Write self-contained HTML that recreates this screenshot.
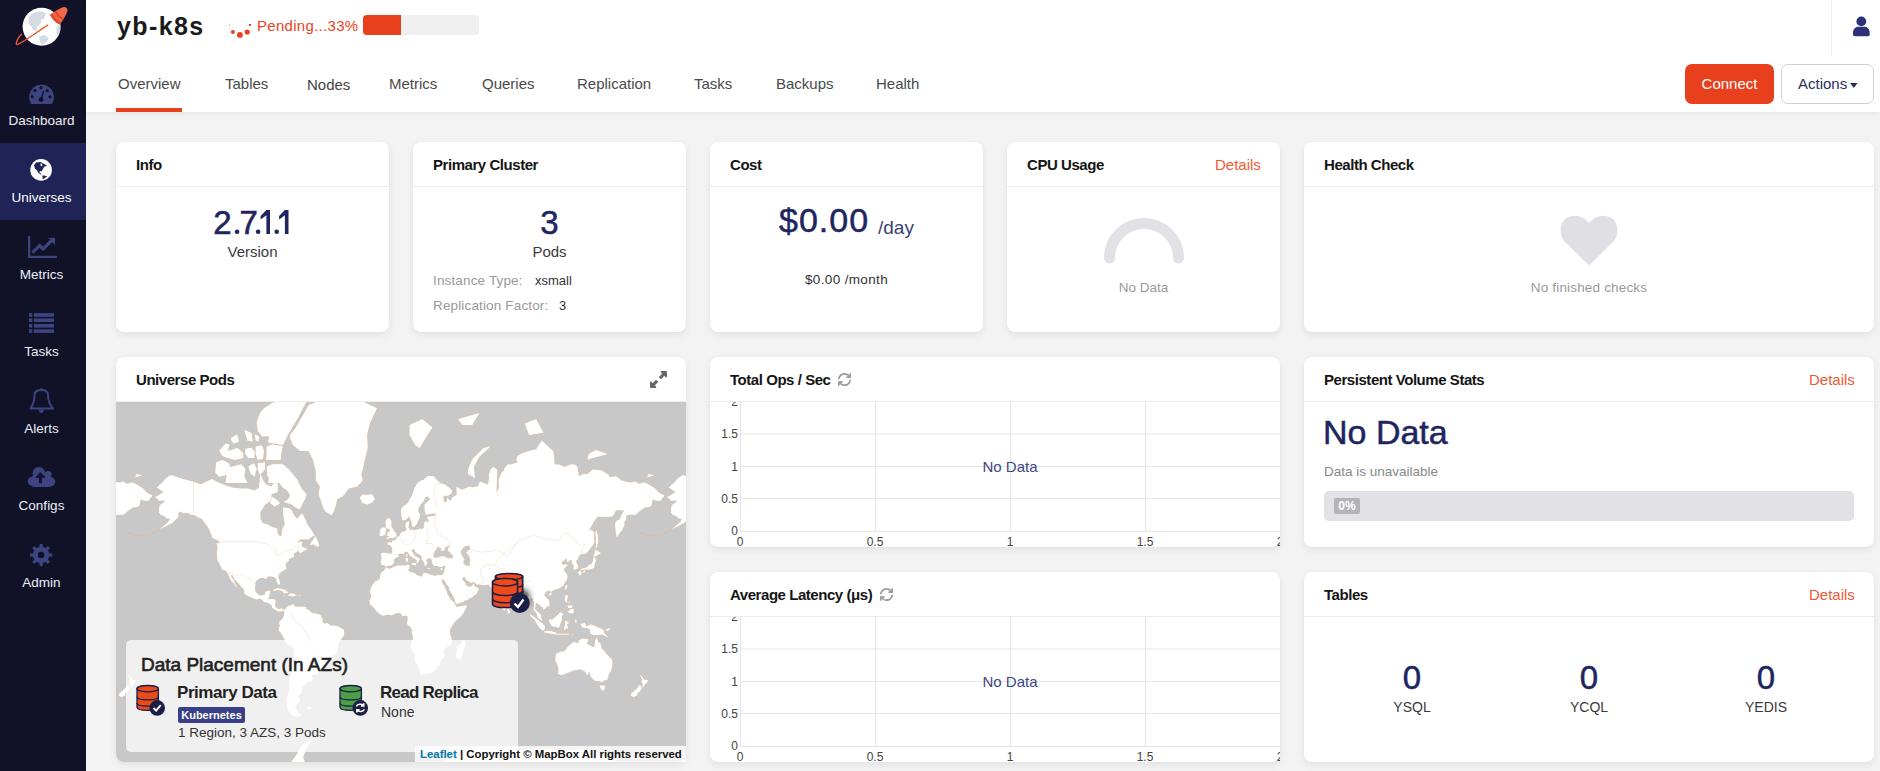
<!DOCTYPE html>
<html><head><meta charset="utf-8">
<style>
*{box-sizing:border-box;margin:0;padding:0}
html,body{width:1880px;height:771px;overflow:hidden;background:#f3f3f3;font-family:"Liberation Sans",sans-serif;color:#333}
.a{position:absolute;white-space:nowrap}
#side{position:absolute;left:0;top:0;width:86px;height:771px;background:#111228}
#side .act{position:absolute;left:0;top:143px;width:86px;height:77px;background:#1f2356}
#side .lbl{position:absolute;width:83px;text-align:center;font-size:13.5px;line-height:14px;color:#eceef5}
#hdr{position:absolute;left:86px;top:0;width:1794px;height:112px;background:#fff;box-shadow:0 2px 6px rgba(0,0,0,0.06)}
.tab{position:absolute;top:76px;font-size:15px;line-height:15px;color:#4a4a4a}
.card{position:absolute;background:#fff;border-radius:8px;box-shadow:0 3px 8px rgba(0,0,0,0.07),0 0 2px rgba(0,0,0,0.04);overflow:hidden}
.card .hd{position:absolute;left:0;top:0;right:0;height:45px;border-bottom:1px solid #ececec}
.ttl{position:absolute;font-size:15px;line-height:15px;font-weight:bold;color:#151515;letter-spacing:-0.45px}
.det{position:absolute;font-size:15px;line-height:15px;color:#ef5a35}
.big{position:absolute;font-size:33px;line-height:33px;color:#202461;text-align:center;-webkit-text-stroke:0.5px #202461}
.sub{position:absolute;font-size:15px;line-height:15px;color:#3a3a3a;text-align:center}
.grey{position:absolute;font-size:13.5px;line-height:13px;color:#999;letter-spacing:0.15px}
</style></head><body>
<div id="side">
  <div class="act"></div>
<svg class="a" style="left:0;top:0" width="86" height="771" viewBox="0 0 86 771">
<!-- logo -->
<g>
<circle cx="41.6" cy="26.8" r="19" fill="#fff"/>
<path d="M28.5 17 C32 12.5 38 11 43 11.5 L46 14 L44 18.5 L41 20 L40.5 24 L37 26.5 L36 31 L33 30 L31 26 L28.5 24 Z" fill="#d5dbe2"/>
<path d="M38.5 36.5 L44 35 L49 38 L46.5 42 L44 44 L41.5 45 L40 41 Z" fill="#d5dbe2"/>
<path d="M56.5 27 L59.5 24.5 L60.3 30 L58.5 36 L56.5 33 Z" fill="#d5dbe2"/>
<path d="M48.2 24.9 C40 30 32 36 24.5 40.5 C19 43.8 16 46 16.3 43.5 C16.6 40.5 19 36.5 21.8 33.9" fill="none" stroke="#e8542e" stroke-width="1.4"/>
<g transform="translate(59.5 15) rotate(45)">
<path d="M-6.8 6.5 C-6 0 -4.5 -5 -3 -8 C-2.2 -9.4 -1.5 -9.8 0 -9.8 C1.5 -9.8 2.2 -9.4 3 -8 C4.5 -5 6 0 6.8 6.5 C2.5 8.3 -2.5 8.3 -6.8 6.5 Z" fill="#ef6a4c"/>
<path d="M-6.8 6.5 C-2.5 8.3 2.5 8.3 6.8 6.5 L6.3 3.8 C2.3 5.5 -2.3 5.5 -6.3 3.8 Z" fill="#e24a27"/>
<path d="M-5.8 1.2 C-2 2.8 2 2.8 5.8 1.2 L5.4 -0.9 C2 0.6 -2 0.6 -5.4 -0.9 Z" fill="#e24a27"/>
</g>
</g>
<!-- dashboard -->
<path d="M31.1 104 A12.5 12.5 0 1 1 51.9 104 Z" fill="#3d4580"/>
<g fill="#111228"><circle cx="32.2" cy="96.7" r="1.6"/><circle cx="34.9" cy="90.5" r="1.6"/><circle cx="41" cy="87.7" r="1.6"/><circle cx="47.3" cy="90.5" r="1.6"/><circle cx="50" cy="96.8" r="1.6"/><circle cx="41.1" cy="99.6" r="2.4"/></g>
<path d="M40.3 99.5 L43 91 L44.1 91.3 L42 99.8 Z" fill="#111228"/>
<!-- universes globe -->
<circle cx="41.1" cy="169.9" r="10.8" fill="#fff"/>
<polygon fill="#1f2356" points="34.0,165.3 36.1,162.4 40.4,162.0 42.3,163.1 47.0,165.5 44.3,166.8 42.7,169.2 41.6,171.5 40.4,171.1 39.2,171.9 40.0,172.7 41.6,174.2 40.8,174.6 38.5,173.1 36.9,170.3 35.1,168.8"/>
<polygon fill="#fff" points="40.2,163.5 42,163.8 42.5,165.5 41,166.2"/>
<polygon fill="#1f2356" points="42.7,175.3 47.3,176.2 43.5,179 42.3,178.6"/>
<!-- metrics -->
<g fill="#3d4580">
<rect x="28" y="236" width="2.2" height="22"/><rect x="28" y="255.8" width="29" height="2.2"/>
<path d="M31.5 251.6 L39.6 243.3 L43.1 246.8 L50.2 239.6 L47.9 237.9 L55.1 237.8 L54.9 244.9 L52.2 242.2 L43.1 251.2 L39.6 247.7 L33.5 253.8 Z"/>
</g>
<!-- tasks -->
<g fill="#3d4580">
<rect x="29" y="313.1" width="3.3" height="3.7"/><rect x="33.9" y="313.1" width="20.1" height="3.7"/>
<rect x="29" y="318.4" width="3.3" height="3.6"/><rect x="33.9" y="318.4" width="20.1" height="3.6"/>
<rect x="29" y="324" width="3.3" height="3.6"/><rect x="33.9" y="324" width="20.1" height="3.6"/>
<rect x="29" y="329.3" width="3.3" height="3.6"/><rect x="33.9" y="329.3" width="20.1" height="3.6"/>
</g>
<!-- alerts bell -->
<g fill="none" stroke="#3d4580" stroke-width="1.9" stroke-linejoin="round">
<path d="M30.5 408.5 L53 408.5 C49 404 48 400 48 395 C48 391 45.5 390 41.3 390 C37 390 34.5 391 34.5 395 C34.5 400 33.5 404 30.5 408.5 Z"/>
</g>
<circle cx="41.3" cy="389.2" r="1.1" fill="#3d4580"/>
<path d="M38.5 409.5 L44 409.5 C43.5 412 42.5 413 41.3 413 C40 413 39 412 38.5 409.5 Z" fill="#3d4580"/>
<!-- configs cloud -->
<g fill="#3d4580">
<circle cx="38.8" cy="473.2" r="6.2"/><circle cx="48.1" cy="474.4" r="3.4"/>
<circle cx="32.2" cy="481.3" r="4.5"/><circle cx="50.5" cy="481.8" r="4.7"/>
<rect x="32" y="476" width="18" height="10.5"/>
<rect x="32.2" y="480" width="18.5" height="7" rx="3"/>
</g>
<path fill="#111228" d="M35.1 477.8 L40.3 471.9 L45.8 477.8 L41.9 477.8 L41.9 483.2 L39 483.2 L39 477.8 Z"/>
<!-- admin gear -->
<g fill="#3d4580" transform="translate(41.1 555)">
<circle r="8.3"/>
<g id="teeth"><rect x="-1.6" y="-11.1" width="3.2" height="4"/><rect x="-1.6" y="7.1" width="3.2" height="4"/><rect x="-11.1" y="-1.6" width="4" height="3.2"/><rect x="7.1" y="-1.6" width="4" height="3.2"/></g>
<g transform="rotate(45)"><rect x="-1.6" y="-11.1" width="3.2" height="4"/><rect x="-1.6" y="7.1" width="3.2" height="4"/><rect x="-11.1" y="-1.6" width="4" height="3.2"/><rect x="7.1" y="-1.6" width="4" height="3.2"/></g>
</g>
<circle cx="41.1" cy="555" r="3.2" fill="#111228"/>
</svg>
  <div class="lbl" style="top:114px">Dashboard</div>
  <div class="lbl" style="top:191px;color:#fff">Universes</div>
  <div class="lbl" style="top:268px">Metrics</div>
  <div class="lbl" style="top:345px">Tasks</div>
  <div class="lbl" style="top:422px">Alerts</div>
  <div class="lbl" style="top:499px">Configs</div>
  <div class="lbl" style="top:576px">Admin</div>
</div>
<div id="hdr"></div>
<div class="a" style="left:117px;top:13.5px;font-size:25px;line-height:25px;font-weight:bold;color:#1a1a1a;letter-spacing:1.4px">yb-k8s</div>
<div class="a" style="left:257px;top:18px;font-size:15px;line-height:15px;color:#e8431e;letter-spacing:0.3px">Pending...33%</div>
<div class="a" style="left:363px;top:15px;width:116px;height:20px;border-radius:4px;background:#efefef;overflow:hidden"><div style="width:38px;height:20px;background:#e8401c"></div></div>
<div class="a" style="left:116px;top:108px;width:66px;height:4px;background:#e8401c"></div>
<div class="tab" style="left:118px">Overview</div>
<div class="tab" style="left:225px">Tables</div>
<div class="tab" style="left:307px;top:77px;color:#444">Nodes</div>
<div class="tab" style="left:389px">Metrics</div>
<div class="tab" style="left:482px">Queries</div>
<div class="tab" style="left:577px">Replication</div>
<div class="tab" style="left:694px">Tasks</div>
<div class="tab" style="left:776px">Backups</div>
<div class="tab" style="left:876px">Health</div>
<div class="a" style="left:1831px;top:0;width:1px;height:56px;background:#eee"></div>
<div class="a" style="left:1685px;top:64px;width:89px;height:40px;border-radius:7px;background:#e8401c;color:#fff;font-size:15px;line-height:40px;text-align:center">Connect</div>
<div class="a" style="left:1781px;top:64px;width:93px;height:40px;border-radius:7px;border:1px solid #d0d0d0;background:#fff;color:#2c2f55;font-size:15px;line-height:38px;padding-left:16px">Actions</div>

<svg class="a" style="left:224px;top:18px" width="32" height="22" viewBox="224 18 32 22"><g fill="#e8401c"><circle cx="229.4" cy="25.4" r="0.6" opacity="0.6"/><circle cx="232.9" cy="32.1" r="2"/><circle cx="239.9" cy="34.9" r="2.9"/><circle cx="247.2" cy="32" r="2.6"/><rect x="249" y="24" width="2" height="2"/></g></svg>
<svg class="a" style="left:1850px;top:14px" width="24" height="26" viewBox="1850 14 24 26"><g fill="#2c3278"><circle cx="1861.3" cy="21.4" r="4.9"/><path d="M1853 33 C1853 28.5 1856 26.8 1858.6 26.8 L1864 26.8 C1866.8 26.8 1869.7 28.5 1869.7 33 L1869.7 34.5 C1869.7 35.5 1869 36.2 1868 36.2 L1854.7 36.2 C1853.7 36.2 1853 35.5 1853 34.5 Z"/></g></svg>
<svg class="a" style="left:1849px;top:82px" width="10" height="8" viewBox="0 0 10 8"><path d="M1 1 L8.6 1 L4.8 6 Z" fill="#2c2f55"/></svg>
<!-- Row 1 -->
<div class="card" style="left:116px;top:142px;width:273px;height:190px"><div class="hd"></div></div>
<div class="card" style="left:413px;top:142px;width:273px;height:190px"><div class="hd"></div></div>
<div class="card" style="left:710px;top:142px;width:273px;height:190px"><div class="hd"></div></div>
<div class="card" style="left:1007px;top:142px;width:273px;height:190px"><div class="hd"></div></div>
<div class="card" style="left:1304px;top:142px;width:570px;height:190px"><div class="hd"></div></div>
<!-- Row 2 -->
<div class="card" style="left:116px;top:357px;width:570px;height:405px"><div class="hd"></div></div>
<div class="card" style="left:710px;top:357px;width:570px;height:190px"><div class="hd"></div></div>
<div class="card" style="left:710px;top:572px;width:570px;height:190px"><div class="hd"></div></div>
<div class="card" style="left:1304px;top:357px;width:570px;height:190px"><div class="hd"></div></div>
<div class="card" style="left:1304px;top:572px;width:570px;height:190px"><div class="hd"></div></div>

<div class="ttl" style="left:136px;top:157px">Info</div>
<div class="ttl" style="left:433px;top:157px">Primary Cluster</div>
<div class="ttl" style="left:730px;top:157px">Cost</div>
<div class="ttl" style="left:1027px;top:157px">CPU Usage</div>
<div class="det" style="left:1215px;top:157px">Details</div>
<div class="ttl" style="left:1324px;top:157px">Health Check</div>
<div class="ttl" style="left:136px;top:372px">Universe Pods</div>
<div class="ttl" style="left:730px;top:372px">Total Ops / Sec</div>
<div class="ttl" style="left:1324px;top:372px">Persistent Volume Stats</div>
<div class="det" style="left:1809px;top:372px">Details</div>
<div class="ttl" style="left:730px;top:587px">Average Latency (&mu;s)</div>
<div class="ttl" style="left:1324px;top:587px">Tables</div>
<div class="det" style="left:1809px;top:587px">Details</div>

<svg class="a" style="left:205px;top:200px" width="95" height="40" viewBox="205 200 95 40"><g fill="#202461" stroke="#202461" stroke-width="0.6" font-family="Liberation Sans" font-size="33"><text x="213.2" y="234">2</text><text x="239.6" y="234">7</text></g>
<g fill="#202461"><circle cx="237.1" cy="231.8" r="2.3"/><circle cx="258.1" cy="231.8" r="2.3"/><circle cx="276.7" cy="231.8" r="2.3"/>
<path d="M266.4 210 L270 210 L270 234.1 L266.4 234.1 L266.4 215.2 L260.6 219.6 L260.6 215.9 Z"/>
<path d="M284.9 210 L288.5 210 L288.5 234.1 L284.9 234.1 L284.9 215.2 L279.1 219.6 L279.1 215.9 Z"/></g></svg>
<div class="sub" style="left:116px;width:273px;top:244px">Version</div>
<div class="big" style="left:413px;width:273px;top:206px">3</div>
<div class="sub" style="left:413px;width:273px;top:244px">Pods</div>
<div class="grey" style="left:433px;top:274px">Instance Type:</div>
<div class="a" style="left:535px;top:274px;font-size:13px;line-height:13px;color:#333">xsmall</div>
<div class="grey" style="left:433px;top:299px">Replication Factor:</div>
<div class="a" style="left:559px;top:299px;font-size:13px;line-height:13px;color:#333">3</div>


<!--MAP--><svg class="a" style="left:116px;top:402px;border-radius:0 0 8px 8px" width="570" height="360" viewBox="0 0 570 360"><rect width="570" height="360" fill="#c8c8c8"/><path fill="#fff" stroke="#e6c2a0" stroke-width="1" d="M39.1 95.2L44.8 91.7L47.6 90.6L45.5 88.4L40.8 85.4L46.2 80.6L50.4 76.1L55.0 73.0L61.8 75.2L67.5 77.3L77.5 79.8L84.6 82.6L88.8 80.6L96.0 76.9L101.6 80.2L107.3 82.6L115.9 85.4L124.4 86.5L131.5 86.5L138.6 88.4L142.9 85.8L144.3 72.1L147.2 78.6L150.0 82.6L155.7 84.6L158.5 79.4L162.1 82.6L161.4 90.2L155.7 92.0L154.3 98.9L149.0 102.8L144.3 109.8L144.3 116.0L146.4 120.9L152.1 122.7L157.1 125.4L161.0 125.9L161.4 130.8L164.2 134.7L165.6 133.1L166.1 127.2L168.9 122.2L167.8 116.9L167.1 111.3L167.1 105.6L172.8 105.9L175.6 108.3L178.4 114.1L181.3 116.6L185.6 111.8L186.6 112.1L189.8 118.2L191.2 122.2L194.1 125.9L196.9 130.8L198.8 133.1L196.2 134.5L192.7 137.2L184.1 137.2L178.4 143.0L179.9 140.9L185.6 139.4L186.3 140.3L185.6 143.0L186.3 145.1L190.5 146.6L191.2 147.6L187.7 149.0L184.1 151.2L182.7 148.8L187.0 146.8L184.1 147.8L181.3 149.4L178.4 151.2L177.4 152.5L178.4 154.6L176.3 155.4L172.8 156.9L172.8 159.1L170.6 160.6L169.5 163.3L170.6 166.5L168.5 167.7L165.6 169.4L162.8 171.9L162.4 175.2L163.5 178.5L164.1 181.7L162.8 182.9L161.7 181.4L160.4 179.3L160.4 176.9L158.5 175.2L155.7 174.6L152.8 174.6L150.7 174.9L151.0 176.9L149.3 176.5L147.2 175.9L144.3 176.1L142.2 177.2L139.6 179.3L139.3 182.5L138.9 187.1L139.6 189.4L141.5 191.7L143.6 193.7L146.4 193.1L148.6 192.9L149.3 191.3L149.6 189.4L152.8 188.7L154.3 188.7L153.6 191.7L153.3 193.5L152.4 196.2L152.6 197.4L155.7 197.1L157.8 197.1L159.5 198.4L159.2 202.1L159.0 204.3L161.4 206.6L162.8 207.4L164.9 206.3L167.8 207.4L168.1 208.3L166.8 209.3L164.9 209.3L163.5 209.6L162.1 209.6L160.0 208.2L156.0 205.7L156.1 204.0L153.6 201.4L150.7 200.6L147.9 199.9L145.7 197.5L143.6 196.6L140.8 197.4L137.9 196.5L134.4 195.0L130.8 193.5L128.0 191.0L128.4 188.7L127.5 186.8L123.7 182.9L122.3 180.9L120.1 178.7L118.4 176.9L117.0 173.6L114.9 172.4L115.6 175.2L117.6 177.7L118.7 180.9L120.1 183.6L121.6 186.1L122.3 186.2L120.8 185.1L118.7 183.6L118.4 181.7L115.9 179.8L115.2 178.5L113.4 175.2L112.3 172.8L111.3 170.7L109.5 168.5L106.5 167.7L104.6 164.2L103.8 161.9L102.1 159.7L101.2 156.9L101.4 154.1L100.9 152.1L101.6 145.5L100.6 141.1L103.1 141.6L103.8 139.8L100.2 137.6L96.7 135.9L96.0 134.3L93.1 127.2L91.7 124.7L88.8 120.9L86.0 116.9L83.2 116.0L78.9 113.3L74.6 112.4L70.4 110.4L67.5 111.5L64.7 109.2L62.2 111.3L62.2 114.9L59.0 118.2L56.1 120.9L53.3 122.2L50.4 123.9L46.2 125.9L44.0 127.2L46.2 125.2L49.0 122.9L52.6 119.5L54.0 116.9L50.4 116.3L47.6 113.5L44.8 112.7L42.9 110.4L43.3 105.3L44.0 103.1L49.0 99.6L47.6 98.6L43.3 98.9L41.2 96.6L39.1 95.2ZM190.5 92.0L189.1 97.2L187.0 100.5L184.8 105.3L183.4 107.4L178.4 104.7L175.6 102.2L167.8 99.9L172.0 97.2L174.2 93.8L171.3 88.4L167.1 85.8L162.8 80.6L160.7 75.6L157.1 78.6L151.4 74.3L150.7 65.1L157.1 62.6L164.2 62.1L169.9 66.1L175.6 72.1L181.3 77.3L183.4 82.6L187.0 88.4ZM155.7 94.5L162.1 98.9L163.9 101.5L158.5 104.4L154.3 101.2ZM193.7 142.8L195.5 139.8L197.6 137.6L199.1 134.0L200.5 136.5L201.9 139.4L203.0 143.0L202.3 144.7L199.8 144.3L198.4 142.6L193.7 142.8ZM174.2 36.4L177.0 43.0L184.1 49.1L192.7 49.1L196.9 57.5L199.8 68.4L199.8 78.6L204.0 84.6L202.6 92.0L205.5 100.5L207.6 106.8L209.7 109.8L215.4 113.3L217.6 109.8L219.7 103.7L221.1 97.2L225.4 94.9L228.2 92.8L232.5 86.5L241.0 84.6L246.7 78.6L245.3 72.1L246.7 67.5L248.8 57.5L251.7 46.1L251.0 32.9L253.8 21.5L260.9 6.2L249.6 1.1L235.3 -13.7L214.0 -5.4L199.8 0.1L192.7 3.2L185.6 15.5L179.9 25.5L174.2 32.9ZM246.0 100.5L243.9 95.5L246.7 92.4L252.4 93.1L255.2 92.0L257.4 94.2L258.8 97.2L256.7 99.9L251.7 102.5L248.1 101.2L246.0 101.2ZM168.1 208.3L169.9 206.4L170.6 205.0L172.8 204.0L175.6 203.1L176.6 202.2L178.2 203.4L178.4 204.3L181.3 204.8L184.1 204.8L187.0 204.8L190.5 205.0L189.8 206.4L192.7 207.9L194.8 210.0L196.9 211.5L199.8 211.6L202.6 212.2L204.8 213.6L205.5 215.0L206.9 217.4L206.2 220.0L209.0 221.7L211.2 221.0L214.7 223.6L218.3 223.8L221.1 224.0L224.0 225.4L227.9 227.8L228.2 231.4L227.5 233.9L224.7 237.9L222.5 240.8L222.5 244.5L221.1 249.8L219.7 252.1L218.3 253.6L214.0 254.9L211.2 256.3L209.0 259.1L208.7 262.3L206.9 264.8L205.5 267.2L203.3 269.8L201.9 271.5L199.8 272.9L197.6 272.9L194.8 272.0L196.5 274.9L196.9 275.8L196.2 278.9L194.1 280.0L189.8 280.3L189.5 283.1L185.6 284.0L186.3 286.9L184.8 291.8L182.0 293.8L184.4 297.6L182.0 301.3L179.9 303.5L180.6 307.6L183.4 312.8L180.6 314.6L177.0 314.1L174.2 310.4L172.0 308.0L170.6 302.4L170.6 298.0L172.0 293.8L172.8 289.8L173.5 284.0L173.5 276.7L174.9 273.2L176.3 268.1L176.3 261.5L177.3 256.7L177.7 253.6L178.2 246.8L175.6 244.5L171.3 242.3L169.2 239.4L168.5 237.2L166.4 233.6L164.9 230.7L162.5 228.5L163.1 227.1L162.5 226.1L163.5 225.0L164.2 223.6L163.1 222.1L163.5 219.3L165.6 217.9L166.4 216.4L167.8 214.3L168.1 211.5L168.1 209.3L168.1 208.3ZM190.5 305.0L195.5 305.3L194.8 307.3L191.2 306.9ZM180.4 308.3L185.3 313.6L179.9 315.1L175.6 311.6L178.4 309.2ZM269.6 165.4L268.3 168.5L265.9 169.9L264.2 172.8L264.1 176.1L262.4 178.2L259.5 179.3L257.4 181.7L255.2 184.8L254.5 187.9L253.7 189.7L254.8 191.7L255.2 194.0L254.5 196.9L253.1 198.9L254.1 200.6L254.1 202.4L256.7 204.3L257.4 205.4L258.8 206.7L259.5 208.2L261.6 210.3L264.5 212.5L267.3 213.7L270.2 212.9L272.3 212.6L275.2 213.3L276.6 212.9L279.4 211.6L280.8 211.0L284.4 211.0L285.8 212.9L286.5 213.9L288.0 213.7L290.1 213.6L291.5 214.6L291.8 215.7L291.5 217.9L291.2 220.0L290.8 221.4L292.2 223.6L294.4 225.0L295.1 226.4L296.5 228.3L295.5 230.0L296.5 232.9L297.2 235.7L295.8 239.4L295.1 242.3L294.8 245.3L295.8 248.3L297.9 251.3L298.6 252.9L298.6 256.7L299.3 259.9L301.5 262.5L302.5 264.8L303.6 267.2L303.9 269.8L304.2 271.5L305.7 272.7L306.4 272.9L309.3 271.6L310.7 271.5L313.6 271.5L315.0 271.1L317.1 269.8L318.5 268.6L320.7 266.4L322.1 263.9L323.8 262.3L324.2 259.9L324.6 257.8L325.6 257.2L328.5 255.2L328.5 252.9L328.2 251.3L327.4 248.3L329.2 247.2L330.6 245.3L333.5 243.8L335.6 241.6L335.6 238.6L335.6 235.7L334.6 234.3L333.9 231.4L333.8 229.3L334.2 227.1L335.2 225.0L337.0 222.6L339.2 219.3L341.3 217.4L344.1 215.0L346.3 212.9L348.4 209.3L349.8 206.4L351.0 203.1L349.1 203.5L346.3 204.0L343.4 204.5L340.6 205.0L339.6 203.4L338.9 202.1L337.7 200.2L336.6 199.2L334.9 197.7L333.9 196.2L332.8 194.0L331.3 192.5L330.9 189.4L329.9 187.6L328.8 185.1L328.1 184.0L326.4 180.9L325.6 179.3L324.4 175.4L323.9 173.3L322.1 172.8L320.0 173.8L317.8 173.6L313.6 172.6L310.7 171.1L307.2 171.1L306.4 173.9L305.0 174.7L303.6 173.9L300.0 172.8L299.6 171.4L296.5 170.4L293.6 169.9L292.5 168.5L292.2 167.7L293.4 165.9L293.6 163.3L292.2 162.8L291.5 162.8L289.4 163.5L285.1 163.6L282.3 163.6L279.4 164.2L276.6 165.6L275.2 166.6L272.3 166.5L269.6 165.4ZM348.1 237.2L349.8 242.3L348.4 245.3L347.0 249.8L346.3 252.1L344.8 256.7L342.0 257.5L340.0 254.4L339.6 252.1L341.0 249.0L340.6 244.5L344.1 242.8L346.3 239.4ZM323.9 173.3L326.6 173.1L327.8 170.6L328.5 167.7L329.1 165.9L329.5 164.0L327.8 163.8L326.4 164.5L324.2 164.9L321.4 164.0L319.2 164.0L317.8 163.6L316.8 162.4L316.4 160.6L315.7 160.6L316.1 158.8L315.3 157.8L315.7 156.5L315.0 156.3L312.1 156.5L310.7 157.3L310.3 158.8L311.0 160.6L312.1 161.1L310.7 161.7L310.0 164.2L308.9 163.5L308.2 161.9L308.2 161.0L306.9 158.8L305.7 156.9L305.7 154.4L304.3 153.1L302.2 151.7L300.8 151.2L299.3 149.6L298.6 147.8L297.5 147.0L295.5 147.4L295.8 149.2L297.3 151.2L298.6 153.7L300.8 155.0L302.9 156.3L304.3 157.5L303.6 158.0L302.2 159.7L301.6 160.8L300.8 161.5L300.3 161.7L300.8 158.8L300.0 157.5L297.9 156.3L295.8 155.0L293.6 153.1L292.9 152.1L292.2 150.2L290.8 149.4L288.7 150.6L287.2 151.9L285.1 151.5L283.0 151.7L282.3 153.1L282.6 154.3L280.8 155.6L279.1 156.0L278.0 157.8L277.6 158.8L278.3 160.2L277.0 162.2L275.2 163.6L271.6 163.8L270.3 164.9L269.0 163.6L267.3 162.9L265.3 163.3L265.5 161.1L264.5 160.0L265.5 156.9L265.5 155.0L264.8 152.1L266.6 150.8L269.5 151.0L272.3 151.4L275.9 151.4L276.3 149.2L276.3 146.2L275.2 144.5L274.4 143.5L271.6 142.2L271.3 141.1L273.7 140.3L275.9 140.5L276.2 138.5L278.3 138.7L280.1 137.2L280.6 135.4L282.3 134.7L283.7 133.6L284.8 131.3L285.1 130.3L288.0 129.4L290.4 128.6L290.4 127.2L289.7 124.7L289.5 120.9L292.9 119.0L292.9 122.9L292.2 124.7L293.6 127.2L293.6 128.4L295.8 127.2L297.9 128.4L300.8 127.7L304.3 126.4L305.7 127.2L307.9 125.9L307.9 122.2L309.0 119.5L310.0 119.0L312.1 120.9L312.6 117.4L311.4 116.9L311.4 114.9L312.6 114.4L317.8 114.1L320.7 112.7L317.8 111.3L313.6 112.1L310.0 112.7L308.6 108.3L308.6 102.2L310.7 100.5L314.3 97.2L312.1 94.5L309.3 94.9L307.9 98.9L305.0 102.2L302.9 105.3L302.2 109.8L304.3 112.7L303.6 115.5L301.5 119.5L301.5 120.9L300.0 122.9L298.3 124.7L296.5 124.9L295.8 122.2L294.8 118.2L293.6 115.5L292.9 114.1L292.2 115.5L289.4 117.9L286.5 118.2L285.8 116.0L285.1 111.3L285.1 106.8L288.0 103.7L290.8 102.2L292.2 100.5L293.6 97.2L295.8 93.8L297.9 88.4L297.9 86.5L300.8 82.6L302.2 80.6L305.0 78.6L307.9 77.7L311.4 74.3L314.7 73.9L317.8 74.3L321.4 78.6L324.9 81.4L329.2 82.6L336.3 88.4L334.9 92.0L332.0 93.8L327.5 93.8L327.5 98.9L329.9 100.5L331.3 98.2L330.6 95.5L334.9 98.9L336.3 95.5L340.6 92.8L340.6 84.6L343.4 86.5L346.3 87.7L353.4 84.6L356.2 85.4L361.9 84.6L364.0 79.4L369.0 81.4L371.9 82.6L373.3 76.5L373.0 72.1L374.7 67.5L377.6 65.1L381.1 67.5L381.1 74.3L380.4 91.0L382.5 86.5L383.2 84.6L382.5 78.6L384.0 74.3L386.1 69.8L388.9 68.4L387.5 67.5L391.8 62.6L394.6 62.6L401.7 60.6L400.3 57.5L401.7 53.7L406.0 51.4L413.1 49.1L420.2 47.3L425.9 38.5L430.2 43.0L437.3 49.1L438.0 54.8L438.7 62.6L443.0 62.6L448.7 65.1L454.4 62.6L458.6 62.6L461.5 65.1L462.9 74.3L467.2 72.1L471.4 72.1L477.1 67.5L485.6 68.4L491.3 72.1L494.2 75.2L499.9 74.3L505.6 78.6L509.8 79.8L515.5 80.6L519.8 79.4L522.6 81.9L528.3 80.6L534.0 83.0L539.7 87.3L542.5 90.2L545.4 92.0L548.6 93.5L545.4 97.2L544.0 98.9L539.7 98.6L536.8 97.2L535.4 103.7L532.6 105.3L529.7 105.3L525.5 107.4L522.6 109.8L519.8 112.7L515.5 112.7L514.1 112.7L510.5 113.3L509.8 118.2L508.4 119.5L508.4 123.4L505.6 128.4L503.4 131.3L500.9 135.4L499.9 130.8L499.2 124.7L499.2 120.9L501.3 118.2L503.4 118.2L505.6 112.7L508.4 108.3L505.6 108.3L499.9 108.3L497.0 114.1L494.2 114.7L489.9 114.7L485.6 114.7L481.4 114.7L477.8 119.5L474.3 125.9L472.8 128.4L475.7 127.9L478.5 130.8L477.8 135.4L478.5 139.8L477.8 142.0L474.3 146.2L471.4 150.2L468.6 152.1L465.7 151.7L464.3 153.1L462.9 153.5L462.2 156.9L460.0 158.8L460.8 161.5L461.9 163.3L462.2 165.9L459.3 167.5L457.6 167.7L457.9 165.8L457.5 163.3L457.9 162.4L455.8 161.5L456.2 158.8L454.8 157.8L451.5 159.7L450.8 159.7L450.8 156.3L448.7 157.5L447.2 159.3L445.8 159.7L445.5 161.5L447.2 162.9L449.7 162.2L452.2 163.3L450.1 164.2L448.7 165.9L447.5 167.7L449.4 170.2L451.2 172.4L451.2 173.9L451.5 175.6L450.8 177.7L449.4 179.3L448.7 180.9L448.0 182.5L446.5 184.0L444.4 185.6L442.3 186.7L439.4 187.6L437.3 188.2L435.9 188.7L434.9 189.7L434.4 190.5L434.0 188.7L432.3 188.5L429.8 189.9L428.8 191.7L428.3 193.2L429.5 194.7L431.9 196.9L432.7 198.0L433.4 201.4L433.3 203.5L431.6 204.5L430.2 205.3L429.2 206.4L427.0 207.7L427.3 206.0L427.0 205.1L425.2 204.8L423.8 202.8L423.1 202.4L421.4 201.8L421.5 200.6L420.2 200.9L419.2 205.0L419.1 206.9L420.6 208.2L420.9 209.6L422.4 210.3L423.5 211.3L425.1 213.2L425.2 215.7L425.9 217.2L426.2 218.2L425.2 218.2L423.5 216.9L422.1 215.9L421.2 214.4L420.8 212.9L420.6 211.0L419.9 210.3L418.1 208.6L417.8 207.9L417.7 205.7L418.2 203.5L418.2 200.6L417.1 198.4L416.7 196.2L415.2 195.8L413.7 197.2L412.8 196.9L412.0 196.9L412.4 194.7L412.4 191.7L411.0 191.0L409.6 189.4L408.8 188.2L408.1 187.0L406.7 187.6L406.0 188.1L404.6 187.9L403.2 187.9L401.7 188.7L401.6 189.7L401.0 191.0L398.9 192.0L398.2 193.2L396.8 194.4L395.0 196.2L393.6 197.2L392.1 197.7L392.1 200.6L392.1 201.4L391.5 203.5L391.5 205.3L390.4 205.4L389.2 207.3L388.2 208.4L386.8 207.1L386.1 205.0L385.1 203.1L384.0 200.6L383.2 198.4L382.5 196.2L381.8 192.5L381.5 189.1L381.1 187.5L380.4 189.0L378.3 189.7L376.1 187.5L377.6 187.1L375.4 185.6L374.0 185.1L373.3 183.6L372.6 182.6L369.7 182.9L366.2 183.1L363.3 182.6L359.8 182.2L358.8 180.1L358.4 179.9L356.2 180.6L354.8 180.7L352.7 179.3L351.2 178.8L349.8 176.9L349.1 174.9L347.7 174.7L346.3 176.1L347.0 178.5L348.4 180.1L349.4 180.9L349.8 183.3L350.5 184.0L351.2 182.5L351.4 184.4L352.7 184.5L354.8 184.5L355.5 184.5L356.9 182.5L358.1 181.2L358.2 183.6L359.1 184.8L361.2 185.4L363.0 187.1L361.9 189.0L361.2 190.2L360.2 192.5L358.8 193.1L356.9 194.3L356.2 195.5L353.4 196.2L352.0 197.7L349.1 198.4L347.0 199.9L344.8 200.6L342.0 201.6L339.9 201.8L339.4 200.6L338.7 197.7L338.4 196.2L337.0 194.0L336.3 192.5L334.9 190.2L333.5 187.9L332.8 184.8L330.6 182.5L329.9 180.9L328.5 178.5L327.8 178.5L327.2 176.1L326.4 178.5L325.6 178.5L324.4 175.4ZM295.6 161.3L300.2 161.0L299.5 163.8L295.8 162.2ZM289.7 156.0L291.9 156.0L291.7 159.7L290.1 159.7ZM290.2 152.3L291.5 152.3L291.4 155.2L290.5 154.8ZM311.4 165.8L315.4 166.5L312.8 167.0L311.4 166.3ZM323.9 166.8L327.1 165.8L326.1 167.7L324.2 167.3ZM269.9 137.4L273.7 136.1L276.6 135.9L280.0 135.0L280.4 131.5L278.4 129.6L277.3 127.2L275.9 125.9L275.2 123.4L275.4 119.3L273.7 116.6L270.9 116.6L269.5 119.5L270.0 123.4L270.0 125.2L271.2 126.4L273.7 127.2L273.7 128.4L273.7 130.1L271.3 130.1L272.0 132.0L270.5 133.6L273.7 134.5L271.6 135.4L269.9 137.4ZM269.5 129.6L269.2 132.7L265.9 134.0L263.4 133.6L264.1 129.6L263.8 127.9L266.3 125.4L269.5 125.4L270.2 127.7L269.5 129.6ZM293.6 32.9L299.3 43.0L303.6 46.1L309.3 36.4L316.4 25.5L306.4 17.3L293.6 23.1ZM352.0 72.1L359.1 76.1L357.6 65.1L363.3 54.8L374.7 44.3L367.6 46.1L356.2 57.5L352.0 67.5ZM413.1 32.9L427.3 30.8L420.2 17.3L408.8 21.5ZM471.4 57.5L491.3 52.0L480.0 47.9L472.8 52.0ZM532.6 72.1L538.3 73.4L531.2 75.2ZM342.0 17.3L363.3 11.0L356.2 23.1L346.3 23.1ZM480.0 127.9L481.8 133.1L482.1 139.8L480.7 146.2L479.8 145.1L480.2 139.8L479.5 132.0ZM464.2 168.5L467.2 167.7L470.0 167.5L472.8 167.5L475.7 167.0L478.2 165.6L478.5 162.4L480.0 158.8L479.2 155.2L477.1 156.3L477.1 158.8L475.7 161.9L472.6 162.9L471.4 165.4L467.2 165.9L464.3 167.5ZM477.1 155.0L478.8 154.4L484.9 151.5L483.5 150.2L479.5 147.4L478.5 151.7ZM462.5 169.4L465.3 168.9L465.0 172.8L463.2 173.3L462.2 170.6ZM466.4 170.2L469.3 168.2L468.9 169.9L467.2 170.7ZM450.1 182.9L451.5 183.3L449.8 187.9L448.7 186.1ZM432.5 192.2L435.2 190.8L435.9 191.7L433.7 193.7ZM449.4 193.2L451.9 193.4L451.5 196.2L450.8 198.4L451.5 199.9L454.4 201.4L453.6 200.2L450.8 200.2L449.4 199.2L448.7 196.9ZM451.5 203.5L456.5 203.5L455.8 206.0L452.2 206.0ZM451.5 210.0L455.8 211.7L457.9 210.0L457.2 206.4L454.4 207.4L453.6 208.6ZM391.5 206.0L394.3 209.3L393.9 211.0L391.9 211.5L391.5 208.6ZM413.5 212.0L417.4 214.3L420.9 217.2L425.2 220.7L426.6 221.4L428.8 224.3L428.5 228.3L426.6 228.4L423.5 225.7L420.6 221.4L418.4 217.4L415.2 215.0ZM427.6 229.7L431.6 228.8L435.9 229.3L440.8 231.0L440.8 232.4L434.4 231.6L428.8 230.6ZM441.6 231.8L447.2 231.7L452.9 231.8L452.9 232.6L447.2 232.6L441.6 232.7ZM433.0 217.9L434.0 217.2L435.9 217.7L438.7 215.4L442.3 212.6L444.4 210.0L447.5 212.5L445.8 213.6L445.8 218.6L445.1 220.0L443.7 223.6L443.0 225.7L440.8 225.0L435.9 224.3L434.4 222.1L433.3 220.0ZM448.0 227.8L448.0 225.0L449.1 223.6L448.7 219.6L449.4 219.0L455.1 218.2L450.1 219.3L453.6 221.1L450.8 222.1L452.2 227.1L450.1 225.7L449.4 227.8ZM459.3 217.2L460.8 219.3L460.0 221.1L459.0 220.0ZM464.3 222.1L468.6 221.1L470.7 224.7L474.3 222.4L478.5 223.7L485.2 226.7L487.8 228.5L488.2 231.4L492.3 235.0L490.6 234.7L486.4 232.4L482.1 232.9L480.8 233.3L477.8 232.9L474.3 231.8L474.3 229.3L473.6 227.1L469.3 225.7L466.4 225.4L465.7 224.0L464.3 222.1ZM489.2 227.8L494.2 226.0L493.5 227.8L491.3 228.8ZM454.4 234.0L458.6 232.0L455.8 233.0ZM480.7 235.3L482.1 240.1L484.6 241.6L485.6 246.8L487.8 248.3L489.9 251.3L492.8 254.4L495.9 257.5L496.5 262.3L495.6 266.4L494.9 268.9L492.8 272.0L491.3 277.6L487.8 278.5L486.1 280.5L483.5 278.9L479.2 279.0L476.5 276.7L474.3 274.1L474.3 271.8L473.6 270.1L471.4 272.9L470.4 272.3L469.0 269.4L464.3 267.2L457.2 268.6L454.4 269.8L450.8 271.1L445.8 273.2L441.6 271.8L442.4 270.3L442.6 267.2L441.4 263.1L439.3 258.3L440.1 252.1L443.7 250.1L448.7 249.0L452.2 244.5L456.5 240.8L458.6 240.1L462.2 241.6L462.9 238.6L466.4 236.5L472.1 237.2L472.1 239.4L470.7 241.6L475.7 244.5L478.2 245.3L479.2 238.6L480.7 235.3ZM483.8 283.5L488.9 283.8L488.8 286.3L487.1 289.0L484.9 286.9ZM523.6 272.3L526.2 274.9L528.3 277.8L531.9 278.0L531.0 280.7L529.6 281.4L527.2 285.2L526.3 284.4L526.9 281.2L525.2 280.7L526.3 277.6L524.3 273.7ZM523.6 283.1L525.9 285.4L524.0 289.4L521.5 290.8L520.9 293.6L517.6 295.1L514.8 293.8L515.1 291.8L517.4 289.8L520.9 286.7L522.8 283.8ZM157.1 188.1L161.4 186.1L168.5 187.6L172.5 190.7L167.8 191.3L166.4 188.7L161.4 187.9L157.8 189.0ZM172.0 193.2L174.9 191.1L180.9 193.1L177.0 194.4L172.2 193.7ZM166.6 193.4L169.6 193.7L168.5 194.3ZM182.4 193.2L184.7 193.4L184.1 194.0ZM22.0 475.2L22.0 403.6L50.4 400.2L64.7 393.9L78.9 385.2L93.1 380.9L107.3 378.9L121.6 379.9L135.8 377.4L150.0 374.9L164.2 377.4L171.3 365.7L181.3 351.6L184.1 346.2L188.4 341.1L196.9 337.2L194.1 341.1L189.8 348.0L187.0 355.4L191.2 365.7L192.7 379.9L206.9 400.2L228.2 403.6L242.4 385.2L256.7 372.5L270.9 365.7L285.1 362.3L299.3 361.4L313.6 362.7L327.8 359.4L334.9 356.6L342.0 352.7L356.2 348.0L370.4 351.6L377.6 355.4L384.7 359.4L391.8 351.6L406.0 348.0L420.2 346.2L434.4 346.9L448.7 348.0L462.9 347.2L477.1 348.7L491.3 355.4L505.6 361.4L516.9 370.2L519.8 374.9L512.7 390.9L519.8 403.6L534.0 403.6L534.0 475.2ZM-188.1 173.3L-185.4 173.1L-184.2 170.6L-183.5 167.7L-182.9 165.9L-182.5 164.0L-184.2 163.8L-185.6 164.5L-187.8 164.9L-190.6 164.0L-192.8 164.0L-194.2 163.6L-195.2 162.4L-195.6 160.6L-196.3 160.6L-195.9 158.8L-196.7 157.8L-196.3 156.5L-197.0 156.3L-199.9 156.5L-201.3 157.3L-201.7 158.8L-201.0 160.6L-199.9 161.1L-201.3 161.7L-202.0 164.2L-203.1 163.5L-203.8 161.9L-203.8 161.0L-205.1 158.8L-206.3 156.9L-206.3 154.4L-207.7 153.1L-209.8 151.7L-211.2 151.2L-212.7 149.6L-213.4 147.8L-214.5 147.0L-216.5 147.4L-216.2 149.2L-214.7 151.2L-213.4 153.7L-211.2 155.0L-209.1 156.3L-207.7 157.5L-208.4 158.0L-209.8 159.7L-210.4 160.8L-211.2 161.5L-211.7 161.7L-211.2 158.8L-212.0 157.5L-214.1 156.3L-216.2 155.0L-218.4 153.1L-219.1 152.1L-219.8 150.2L-221.2 149.4L-223.3 150.6L-224.8 151.9L-226.9 151.5L-229.0 151.7L-229.7 153.1L-229.4 154.3L-231.2 155.6L-232.9 156.0L-234.0 157.8L-234.4 158.8L-233.7 160.2L-235.0 162.2L-236.8 163.6L-240.4 163.8L-241.7 164.9L-243.0 163.6L-244.7 162.9L-246.7 163.3L-246.5 161.1L-247.5 160.0L-246.5 156.9L-246.5 155.0L-247.2 152.1L-245.4 150.8L-242.5 151.0L-239.7 151.4L-236.1 151.4L-235.7 149.2L-235.7 146.2L-236.8 144.5L-237.6 143.5L-240.4 142.2L-240.7 141.1L-238.3 140.3L-236.1 140.5L-235.8 138.5L-233.7 138.7L-231.9 137.2L-231.4 135.4L-229.7 134.7L-228.3 133.6L-227.2 131.3L-226.9 130.3L-224.0 129.4L-221.6 128.6L-221.6 127.2L-222.3 124.7L-222.5 120.9L-219.1 119.0L-219.1 122.9L-219.8 124.7L-218.4 127.2L-218.4 128.4L-216.2 127.2L-214.1 128.4L-211.2 127.7L-207.7 126.4L-206.3 127.2L-204.1 125.9L-204.1 122.2L-203.0 119.5L-202.0 119.0L-199.9 120.9L-199.4 117.4L-200.6 116.9L-200.6 114.9L-199.4 114.4L-194.2 114.1L-191.3 112.7L-194.2 111.3L-198.4 112.1L-202.0 112.7L-203.4 108.3L-203.4 102.2L-201.3 100.5L-197.7 97.2L-199.9 94.5L-202.7 94.9L-204.1 98.9L-207.0 102.2L-209.1 105.3L-209.8 109.8L-207.7 112.7L-208.4 115.5L-210.5 119.5L-210.5 120.9L-212.0 122.9L-213.7 124.7L-215.5 124.9L-216.2 122.2L-217.2 118.2L-218.4 115.5L-219.1 114.1L-219.8 115.5L-222.6 117.9L-225.5 118.2L-226.2 116.0L-226.9 111.3L-226.9 106.8L-224.0 103.7L-221.2 102.2L-219.8 100.5L-218.4 97.2L-216.2 93.8L-214.1 88.4L-214.1 86.5L-211.2 82.6L-209.8 80.6L-207.0 78.6L-204.1 77.7L-200.6 74.3L-197.3 73.9L-194.2 74.3L-190.6 78.6L-187.1 81.4L-182.8 82.6L-175.7 88.4L-177.1 92.0L-180.0 93.8L-184.5 93.8L-184.5 98.9L-182.1 100.5L-180.7 98.2L-181.4 95.5L-177.1 98.9L-175.7 95.5L-171.4 92.8L-171.4 84.6L-168.6 86.5L-165.7 87.7L-158.6 84.6L-155.8 85.4L-150.1 84.6L-148.0 79.4L-143.0 81.4L-140.1 82.6L-138.7 76.5L-139.0 72.1L-137.3 67.5L-134.4 65.1L-130.9 67.5L-130.9 74.3L-131.6 91.0L-129.5 86.5L-128.8 84.6L-129.5 78.6L-128.0 74.3L-125.9 69.8L-123.1 68.4L-124.5 67.5L-120.2 62.6L-117.4 62.6L-110.3 60.6L-111.7 57.5L-110.3 53.7L-106.0 51.4L-98.9 49.1L-91.8 47.3L-86.1 38.5L-81.8 43.0L-74.7 49.1L-74.0 54.8L-73.3 62.6L-69.0 62.6L-63.3 65.1L-57.6 62.6L-53.4 62.6L-50.5 65.1L-49.1 74.3L-44.8 72.1L-40.6 72.1L-34.9 67.5L-26.4 68.4L-20.7 72.1L-17.8 75.2L-12.1 74.3L-6.4 78.6L-2.2 79.8L3.5 80.6L7.8 79.4L10.6 81.9L16.3 80.6L22.0 83.0L27.7 87.3L30.5 90.2L33.4 92.0L36.6 93.5L33.4 97.2L32.0 98.9L27.7 98.6L24.8 97.2L23.4 103.7L20.6 105.3L17.7 105.3L13.5 107.4L10.6 109.8L7.8 112.7L3.5 112.7L2.1 112.7L-1.5 113.3L-2.2 118.2L-3.6 119.5L-3.6 123.4L-6.4 128.4L-8.6 131.3L-11.1 135.4L-12.1 130.8L-12.8 124.7L-12.8 120.9L-10.7 118.2L-8.6 118.2L-6.4 112.7L-3.6 108.3L-6.4 108.3L-12.1 108.3L-15.0 114.1L-17.8 114.7L-22.1 114.7L-26.4 114.7L-30.6 114.7L-34.2 119.5L-37.7 125.9L-39.2 128.4L-36.3 127.9L-33.5 130.8L-34.2 135.4L-33.5 139.8L-34.2 142.0L-37.7 146.2L-40.6 150.2L-43.4 152.1L-46.3 151.7L-47.7 153.1L-49.1 153.5L-49.8 156.9L-52.0 158.8L-51.2 161.5L-50.1 163.3L-49.8 165.9L-52.7 167.5L-54.4 167.7L-54.1 165.8L-54.5 163.3L-54.1 162.4L-56.2 161.5L-55.8 158.8L-57.2 157.8L-60.5 159.7L-61.2 159.7L-61.2 156.3L-63.3 157.5L-64.8 159.3L-66.2 159.7L-66.5 161.5L-64.8 162.9L-62.3 162.2L-59.8 163.3L-61.9 164.2L-63.3 165.9L-64.5 167.7L-62.6 170.2L-60.8 172.4L-60.8 173.9L-60.5 175.6L-61.2 177.7L-62.6 179.3L-63.3 180.9L-64.0 182.5L-65.5 184.0L-67.6 185.6L-69.7 186.7L-72.6 187.6L-74.7 188.2L-76.1 188.7L-77.1 189.7L-77.6 190.5L-78.0 188.7L-79.7 188.5L-82.2 189.9L-83.2 191.7L-83.7 193.2L-82.5 194.7L-80.1 196.9L-79.3 198.0L-78.6 201.4L-78.7 203.5L-80.4 204.5L-81.8 205.3L-82.8 206.4L-85.0 207.7L-84.7 206.0L-85.0 205.1L-86.8 204.8L-88.2 202.8L-88.9 202.4L-90.6 201.8L-90.5 200.6L-91.8 200.9L-92.8 205.0L-92.9 206.9L-91.4 208.2L-91.1 209.6L-89.6 210.3L-88.5 211.3L-86.9 213.2L-86.8 215.7L-86.1 217.2L-85.8 218.2L-86.8 218.2L-88.5 216.9L-89.9 215.9L-90.8 214.4L-91.2 212.9L-91.4 211.0L-92.1 210.3L-93.9 208.6L-94.2 207.9L-94.3 205.7L-93.8 203.5L-93.8 200.6L-94.9 198.4L-95.3 196.2L-96.8 195.8L-98.3 197.2L-99.2 196.9L-100.0 196.9L-99.6 194.7L-99.6 191.7L-101.0 191.0L-102.4 189.4L-103.2 188.2L-103.9 187.0L-105.3 187.6L-106.0 188.1L-107.4 187.9L-108.8 187.9L-110.3 188.7L-110.4 189.7L-111.0 191.0L-113.1 192.0L-113.8 193.2L-115.2 194.4L-117.0 196.2L-118.4 197.2L-119.9 197.7L-119.9 200.6L-119.9 201.4L-120.5 203.5L-120.5 205.3L-121.6 205.4L-122.8 207.3L-123.8 208.4L-125.2 207.1L-125.9 205.0L-126.9 203.1L-128.0 200.6L-128.8 198.4L-129.5 196.2L-130.2 192.5L-130.5 189.1L-130.9 187.5L-131.6 189.0L-133.7 189.7L-135.9 187.5L-134.4 187.1L-136.6 185.6L-138.0 185.1L-138.7 183.6L-139.4 182.6L-142.3 182.9L-145.8 183.1L-148.7 182.6L-152.2 182.2L-153.2 180.1L-153.6 179.9L-155.8 180.6L-157.2 180.7L-159.3 179.3L-160.8 178.8L-162.2 176.9L-162.9 174.9L-164.3 174.7L-165.7 176.1L-165.0 178.5L-163.6 180.1L-162.6 180.9L-162.2 183.3L-161.5 184.0L-160.8 182.5L-160.6 184.4L-159.3 184.5L-157.2 184.5L-156.5 184.5L-155.1 182.5L-153.9 181.2L-153.8 183.6L-152.9 184.8L-150.8 185.4L-149.0 187.1L-150.1 189.0L-150.8 190.2L-151.8 192.5L-153.2 193.1L-155.1 194.3L-155.8 195.5L-158.6 196.2L-160.0 197.7L-162.9 198.4L-165.0 199.9L-167.2 200.6L-170.0 201.6L-172.1 201.8L-172.6 200.6L-173.3 197.7L-173.6 196.2L-175.0 194.0L-175.7 192.5L-177.1 190.2L-178.5 187.9L-179.2 184.8L-181.4 182.5L-182.1 180.9L-183.5 178.5L-184.2 178.5L-184.8 176.1L-185.6 178.5L-186.4 178.5L-187.6 175.4ZM20.6 72.1L26.3 73.4L19.2 75.2ZM11.6 272.3L14.2 274.9L16.3 277.8L19.9 278.0L19.0 280.7L17.6 281.4L15.2 285.2L14.3 284.4L14.9 281.2L13.2 280.7L14.3 277.6L12.3 273.7ZM11.6 283.1L13.9 285.4L12.0 289.4L9.5 290.8L8.9 293.6L5.6 295.1L2.8 293.8L3.1 291.8L5.4 289.8L8.9 286.7L10.8 283.8ZM-490.0 475.2L-490.0 403.6L-461.6 400.2L-447.3 393.9L-433.1 385.2L-418.9 380.9L-404.7 378.9L-390.4 379.9L-376.2 377.4L-362.0 374.9L-347.8 377.4L-340.7 365.7L-330.7 351.6L-327.9 346.2L-323.6 341.1L-315.1 337.2L-317.9 341.1L-322.2 348.0L-325.0 355.4L-320.8 365.7L-319.3 379.9L-305.1 400.2L-283.8 403.6L-269.6 385.2L-255.3 372.5L-241.1 365.7L-226.9 362.3L-212.7 361.4L-198.4 362.7L-184.2 359.4L-177.1 356.6L-170.0 352.7L-155.8 348.0L-141.6 351.6L-134.4 355.4L-127.3 359.4L-120.2 351.6L-106.0 348.0L-91.8 346.2L-77.6 346.9L-63.3 348.0L-49.1 347.2L-34.9 348.7L-20.7 355.4L-6.4 361.4L4.9 370.2L7.8 374.9L0.7 390.9L7.8 403.6L22.0 403.6L22.0 475.2ZM551.1 95.2L556.8 91.7L559.6 90.6L557.5 88.4L552.8 85.4L558.2 80.6L562.4 76.1L567.0 73.0L573.8 75.2L579.5 77.3L589.5 79.8L596.6 82.6L600.8 80.6L608.0 76.9L613.6 80.2L619.3 82.6L627.9 85.4L636.4 86.5L643.5 86.5L650.6 88.4L654.9 85.8L656.3 72.1L659.2 78.6L662.0 82.6L667.7 84.6L670.5 79.4L674.1 82.6L673.4 90.2L667.7 92.0L666.3 98.9L661.0 102.8L656.3 109.8L656.3 116.0L658.4 120.9L664.1 122.7L669.1 125.4L673.0 125.9L673.4 130.8L676.2 134.7L677.6 133.1L678.1 127.2L680.9 122.2L679.8 116.9L679.1 111.3L679.1 105.6L684.8 105.9L687.6 108.3L690.4 114.1L693.3 116.6L697.6 111.8L698.6 112.1L701.8 118.2L703.2 122.2L706.1 125.9L708.9 130.8L710.8 133.1L708.2 134.5L704.7 137.2L696.1 137.2L690.4 143.0L691.9 140.9L697.6 139.4L698.3 140.3L697.6 143.0L698.3 145.1L702.5 146.6L703.2 147.6L699.7 149.0L696.1 151.2L694.7 148.8L699.0 146.8L696.1 147.8L693.3 149.4L690.4 151.2L689.4 152.5L690.4 154.6L688.3 155.4L684.8 156.9L684.8 159.1L682.6 160.6L681.5 163.3L682.6 166.5L680.5 167.7L677.6 169.4L674.8 171.9L674.4 175.2L675.5 178.5L676.1 181.7L674.8 182.9L673.7 181.4L672.4 179.3L672.4 176.9L670.5 175.2L667.7 174.6L664.8 174.6L662.7 174.9L663.0 176.9L661.3 176.5L659.2 175.9L656.3 176.1L654.2 177.2L651.6 179.3L651.3 182.5L650.9 187.1L651.6 189.4L653.5 191.7L655.6 193.7L658.4 193.1L660.6 192.9L661.3 191.3L661.6 189.4L664.8 188.7L666.3 188.7L665.6 191.7L665.3 193.5L664.4 196.2L664.6 197.4L667.7 197.1L669.8 197.1L671.5 198.4L671.2 202.1L671.0 204.3L673.4 206.6L674.8 207.4L676.9 206.3L679.8 207.4L680.1 208.3L678.8 209.3L676.9 209.3L675.5 209.6L674.1 209.6L672.0 208.2L668.0 205.7L668.1 204.0L665.6 201.4L662.7 200.6L659.9 199.9L657.7 197.5L655.6 196.6L652.8 197.4L649.9 196.5L646.4 195.0L642.8 193.5L640.0 191.0L640.4 188.7L639.5 186.8L635.7 182.9L634.3 180.9L632.1 178.7L630.4 176.9L629.0 173.6L626.9 172.4L627.6 175.2L629.6 177.7L630.7 180.9L632.1 183.6L633.6 186.1L634.3 186.2L632.8 185.1L630.7 183.6L630.4 181.7L627.9 179.8L627.2 178.5L625.4 175.2L624.3 172.8L623.3 170.7L621.5 168.5L618.5 167.7L616.6 164.2L615.8 161.9L614.1 159.7L613.2 156.9L613.4 154.1L612.9 152.1L613.6 145.5L612.6 141.1L615.1 141.6L615.8 139.8L612.2 137.6L608.7 135.9L608.0 134.3L605.1 127.2L603.7 124.7L600.8 120.9L598.0 116.9L595.2 116.0L590.9 113.3L586.6 112.4L582.4 110.4L579.5 111.5L576.7 109.2L574.2 111.3L574.2 114.9L571.0 118.2L568.1 120.9L565.3 122.2L562.4 123.9L558.2 125.9L556.0 127.2L558.2 125.2L561.0 122.9L564.6 119.5L566.0 116.9L562.4 116.3L559.6 113.5L556.8 112.7L554.9 110.4L555.3 105.3L556.0 103.1L561.0 99.6L559.6 98.6L555.3 98.9L553.2 96.6L551.1 95.2ZM534.0 475.2L534.0 403.6L562.4 400.2L576.7 393.9L590.9 385.2L605.1 380.9L619.3 378.9L633.6 379.9L647.8 377.4L662.0 374.9L676.2 377.4L683.3 365.7L693.3 351.6L696.1 346.2L700.4 341.1L708.9 337.2L706.1 341.1L701.8 348.0L699.0 355.4L703.2 365.7L704.7 379.9L718.9 400.2L740.2 403.6L754.4 385.2L768.7 372.5L782.9 365.7L797.1 362.3L811.3 361.4L825.6 362.7L839.8 359.4L846.9 356.6L854.0 352.7L868.2 348.0L882.4 351.6L889.6 355.4L896.7 359.4L903.8 351.6L918.0 348.0L932.2 346.2L946.4 346.9L960.7 348.0L974.9 347.2L989.1 348.7L1003.3 355.4L1017.6 361.4L1028.9 370.2L1031.8 374.9L1024.7 390.9L1031.8 403.6L1046.0 403.6L1046.0 475.2ZM140.7 20.8L143.8 11.4L148.0 6.2L156.3 1.0L160.4 -0.5L190.5 -0.5L187.4 5.2L182.2 15.6L177.0 23.9L172.9 31.1L168.7 39.4L166.7 43.1L158.4 41.5L152.1 40.5L153.2 34.3L145.9 34.3L141.8 29.1ZM150.6 44.6L156.3 42.6L166.7 44.1L165.6 49.8L164.6 58.1L156.3 58.1L150.1 58.1L150.6 51.9ZM139.7 44.6L145.9 43.6L148.0 48.8L146.9 57.1L141.8 58.1L139.7 51.9ZM129.3 46.7L135.5 45.7L138.6 49.8L138.6 56.1L132.4 56.1L129.3 51.9ZM103.3 48.8L109.6 41.5L113.7 42.6L111.6 48.8L116.8 47.8L121.0 45.7L127.2 50.9L127.2 56.1L118.9 58.1L111.6 56.1L106.5 54.0ZM114.8 36.3L121.0 32.2L123.1 39.4L117.9 41.5L115.8 39.4ZM128.3 28.0L135.5 31.1L136.6 39.4L131.4 38.4ZM138.6 32.2L142.8 34.3L142.8 39.4L139.7 38.4ZM100.2 60.2L106.5 58.1L112.7 61.2L114.8 66.4L110.6 72.7L103.3 74.7L99.2 70.6ZM109.6 66.4L116.8 64.4L125.1 62.3L129.3 66.4L128.3 74.7L131.4 81.0L109.6 81.0L110.6 72.7ZM132.4 64.4L137.6 61.2L140.7 66.4L138.6 74.7L134.5 71.6ZM141.8 61.2L149.0 60.2L149.0 67.5L143.8 72.7L141.8 67.5ZM151.1 64.4L156.3 62.3L166.7 62.3L172.9 67.5L179.1 74.7L182.2 81.0L152.1 81.0L153.2 72.7Z"/><path fill="#fff" d="M39.1 95.2L44.8 91.7L47.6 90.6L45.5 88.4L40.8 85.4L46.2 80.6L50.4 76.1L55.0 73.0L61.8 75.2L67.5 77.3L77.5 79.8L84.6 82.6L88.8 80.6L96.0 76.9L101.6 80.2L107.3 82.6L115.9 85.4L124.4 86.5L131.5 86.5L138.6 88.4L142.9 85.8L144.3 72.1L147.2 78.6L150.0 82.6L155.7 84.6L158.5 79.4L162.1 82.6L161.4 90.2L155.7 92.0L154.3 98.9L149.0 102.8L144.3 109.8L144.3 116.0L146.4 120.9L152.1 122.7L157.1 125.4L161.0 125.9L161.4 130.8L164.2 134.7L165.6 133.1L166.1 127.2L168.9 122.2L167.8 116.9L167.1 111.3L167.1 105.6L172.8 105.9L175.6 108.3L178.4 114.1L181.3 116.6L185.6 111.8L186.6 112.1L189.8 118.2L191.2 122.2L194.1 125.9L196.9 130.8L198.8 133.1L196.2 134.5L192.7 137.2L184.1 137.2L178.4 143.0L179.9 140.9L185.6 139.4L186.3 140.3L185.6 143.0L186.3 145.1L190.5 146.6L191.2 147.6L187.7 149.0L184.1 151.2L182.7 148.8L187.0 146.8L184.1 147.8L181.3 149.4L178.4 151.2L177.4 152.5L178.4 154.6L176.3 155.4L172.8 156.9L172.8 159.1L170.6 160.6L169.5 163.3L170.6 166.5L168.5 167.7L165.6 169.4L162.8 171.9L162.4 175.2L163.5 178.5L164.1 181.7L162.8 182.9L161.7 181.4L160.4 179.3L160.4 176.9L158.5 175.2L155.7 174.6L152.8 174.6L150.7 174.9L151.0 176.9L149.3 176.5L147.2 175.9L144.3 176.1L142.2 177.2L139.6 179.3L139.3 182.5L138.9 187.1L139.6 189.4L141.5 191.7L143.6 193.7L146.4 193.1L148.6 192.9L149.3 191.3L149.6 189.4L152.8 188.7L154.3 188.7L153.6 191.7L153.3 193.5L152.4 196.2L152.6 197.4L155.7 197.1L157.8 197.1L159.5 198.4L159.2 202.1L159.0 204.3L161.4 206.6L162.8 207.4L164.9 206.3L167.8 207.4L168.1 208.3L166.8 209.3L164.9 209.3L163.5 209.6L162.1 209.6L160.0 208.2L156.0 205.7L156.1 204.0L153.6 201.4L150.7 200.6L147.9 199.9L145.7 197.5L143.6 196.6L140.8 197.4L137.9 196.5L134.4 195.0L130.8 193.5L128.0 191.0L128.4 188.7L127.5 186.8L123.7 182.9L122.3 180.9L120.1 178.7L118.4 176.9L117.0 173.6L114.9 172.4L115.6 175.2L117.6 177.7L118.7 180.9L120.1 183.6L121.6 186.1L122.3 186.2L120.8 185.1L118.7 183.6L118.4 181.7L115.9 179.8L115.2 178.5L113.4 175.2L112.3 172.8L111.3 170.7L109.5 168.5L106.5 167.7L104.6 164.2L103.8 161.9L102.1 159.7L101.2 156.9L101.4 154.1L100.9 152.1L101.6 145.5L100.6 141.1L103.1 141.6L103.8 139.8L100.2 137.6L96.7 135.9L96.0 134.3L93.1 127.2L91.7 124.7L88.8 120.9L86.0 116.9L83.2 116.0L78.9 113.3L74.6 112.4L70.4 110.4L67.5 111.5L64.7 109.2L62.2 111.3L62.2 114.9L59.0 118.2L56.1 120.9L53.3 122.2L50.4 123.9L46.2 125.9L44.0 127.2L46.2 125.2L49.0 122.9L52.6 119.5L54.0 116.9L50.4 116.3L47.6 113.5L44.8 112.7L42.9 110.4L43.3 105.3L44.0 103.1L49.0 99.6L47.6 98.6L43.3 98.9L41.2 96.6L39.1 95.2ZM190.5 92.0L189.1 97.2L187.0 100.5L184.8 105.3L183.4 107.4L178.4 104.7L175.6 102.2L167.8 99.9L172.0 97.2L174.2 93.8L171.3 88.4L167.1 85.8L162.8 80.6L160.7 75.6L157.1 78.6L151.4 74.3L150.7 65.1L157.1 62.6L164.2 62.1L169.9 66.1L175.6 72.1L181.3 77.3L183.4 82.6L187.0 88.4ZM155.7 94.5L162.1 98.9L163.9 101.5L158.5 104.4L154.3 101.2ZM193.7 142.8L195.5 139.8L197.6 137.6L199.1 134.0L200.5 136.5L201.9 139.4L203.0 143.0L202.3 144.7L199.8 144.3L198.4 142.6L193.7 142.8ZM174.2 36.4L177.0 43.0L184.1 49.1L192.7 49.1L196.9 57.5L199.8 68.4L199.8 78.6L204.0 84.6L202.6 92.0L205.5 100.5L207.6 106.8L209.7 109.8L215.4 113.3L217.6 109.8L219.7 103.7L221.1 97.2L225.4 94.9L228.2 92.8L232.5 86.5L241.0 84.6L246.7 78.6L245.3 72.1L246.7 67.5L248.8 57.5L251.7 46.1L251.0 32.9L253.8 21.5L260.9 6.2L249.6 1.1L235.3 -13.7L214.0 -5.4L199.8 0.1L192.7 3.2L185.6 15.5L179.9 25.5L174.2 32.9ZM246.0 100.5L243.9 95.5L246.7 92.4L252.4 93.1L255.2 92.0L257.4 94.2L258.8 97.2L256.7 99.9L251.7 102.5L248.1 101.2L246.0 101.2ZM168.1 208.3L169.9 206.4L170.6 205.0L172.8 204.0L175.6 203.1L176.6 202.2L178.2 203.4L178.4 204.3L181.3 204.8L184.1 204.8L187.0 204.8L190.5 205.0L189.8 206.4L192.7 207.9L194.8 210.0L196.9 211.5L199.8 211.6L202.6 212.2L204.8 213.6L205.5 215.0L206.9 217.4L206.2 220.0L209.0 221.7L211.2 221.0L214.7 223.6L218.3 223.8L221.1 224.0L224.0 225.4L227.9 227.8L228.2 231.4L227.5 233.9L224.7 237.9L222.5 240.8L222.5 244.5L221.1 249.8L219.7 252.1L218.3 253.6L214.0 254.9L211.2 256.3L209.0 259.1L208.7 262.3L206.9 264.8L205.5 267.2L203.3 269.8L201.9 271.5L199.8 272.9L197.6 272.9L194.8 272.0L196.5 274.9L196.9 275.8L196.2 278.9L194.1 280.0L189.8 280.3L189.5 283.1L185.6 284.0L186.3 286.9L184.8 291.8L182.0 293.8L184.4 297.6L182.0 301.3L179.9 303.5L180.6 307.6L183.4 312.8L180.6 314.6L177.0 314.1L174.2 310.4L172.0 308.0L170.6 302.4L170.6 298.0L172.0 293.8L172.8 289.8L173.5 284.0L173.5 276.7L174.9 273.2L176.3 268.1L176.3 261.5L177.3 256.7L177.7 253.6L178.2 246.8L175.6 244.5L171.3 242.3L169.2 239.4L168.5 237.2L166.4 233.6L164.9 230.7L162.5 228.5L163.1 227.1L162.5 226.1L163.5 225.0L164.2 223.6L163.1 222.1L163.5 219.3L165.6 217.9L166.4 216.4L167.8 214.3L168.1 211.5L168.1 209.3L168.1 208.3ZM190.5 305.0L195.5 305.3L194.8 307.3L191.2 306.9ZM180.4 308.3L185.3 313.6L179.9 315.1L175.6 311.6L178.4 309.2ZM269.6 165.4L268.3 168.5L265.9 169.9L264.2 172.8L264.1 176.1L262.4 178.2L259.5 179.3L257.4 181.7L255.2 184.8L254.5 187.9L253.7 189.7L254.8 191.7L255.2 194.0L254.5 196.9L253.1 198.9L254.1 200.6L254.1 202.4L256.7 204.3L257.4 205.4L258.8 206.7L259.5 208.2L261.6 210.3L264.5 212.5L267.3 213.7L270.2 212.9L272.3 212.6L275.2 213.3L276.6 212.9L279.4 211.6L280.8 211.0L284.4 211.0L285.8 212.9L286.5 213.9L288.0 213.7L290.1 213.6L291.5 214.6L291.8 215.7L291.5 217.9L291.2 220.0L290.8 221.4L292.2 223.6L294.4 225.0L295.1 226.4L296.5 228.3L295.5 230.0L296.5 232.9L297.2 235.7L295.8 239.4L295.1 242.3L294.8 245.3L295.8 248.3L297.9 251.3L298.6 252.9L298.6 256.7L299.3 259.9L301.5 262.5L302.5 264.8L303.6 267.2L303.9 269.8L304.2 271.5L305.7 272.7L306.4 272.9L309.3 271.6L310.7 271.5L313.6 271.5L315.0 271.1L317.1 269.8L318.5 268.6L320.7 266.4L322.1 263.9L323.8 262.3L324.2 259.9L324.6 257.8L325.6 257.2L328.5 255.2L328.5 252.9L328.2 251.3L327.4 248.3L329.2 247.2L330.6 245.3L333.5 243.8L335.6 241.6L335.6 238.6L335.6 235.7L334.6 234.3L333.9 231.4L333.8 229.3L334.2 227.1L335.2 225.0L337.0 222.6L339.2 219.3L341.3 217.4L344.1 215.0L346.3 212.9L348.4 209.3L349.8 206.4L351.0 203.1L349.1 203.5L346.3 204.0L343.4 204.5L340.6 205.0L339.6 203.4L338.9 202.1L337.7 200.2L336.6 199.2L334.9 197.7L333.9 196.2L332.8 194.0L331.3 192.5L330.9 189.4L329.9 187.6L328.8 185.1L328.1 184.0L326.4 180.9L325.6 179.3L324.4 175.4L323.9 173.3L322.1 172.8L320.0 173.8L317.8 173.6L313.6 172.6L310.7 171.1L307.2 171.1L306.4 173.9L305.0 174.7L303.6 173.9L300.0 172.8L299.6 171.4L296.5 170.4L293.6 169.9L292.5 168.5L292.2 167.7L293.4 165.9L293.6 163.3L292.2 162.8L291.5 162.8L289.4 163.5L285.1 163.6L282.3 163.6L279.4 164.2L276.6 165.6L275.2 166.6L272.3 166.5L269.6 165.4ZM348.1 237.2L349.8 242.3L348.4 245.3L347.0 249.8L346.3 252.1L344.8 256.7L342.0 257.5L340.0 254.4L339.6 252.1L341.0 249.0L340.6 244.5L344.1 242.8L346.3 239.4ZM323.9 173.3L326.6 173.1L327.8 170.6L328.5 167.7L329.1 165.9L329.5 164.0L327.8 163.8L326.4 164.5L324.2 164.9L321.4 164.0L319.2 164.0L317.8 163.6L316.8 162.4L316.4 160.6L315.7 160.6L316.1 158.8L315.3 157.8L315.7 156.5L315.0 156.3L312.1 156.5L310.7 157.3L310.3 158.8L311.0 160.6L312.1 161.1L310.7 161.7L310.0 164.2L308.9 163.5L308.2 161.9L308.2 161.0L306.9 158.8L305.7 156.9L305.7 154.4L304.3 153.1L302.2 151.7L300.8 151.2L299.3 149.6L298.6 147.8L297.5 147.0L295.5 147.4L295.8 149.2L297.3 151.2L298.6 153.7L300.8 155.0L302.9 156.3L304.3 157.5L303.6 158.0L302.2 159.7L301.6 160.8L300.8 161.5L300.3 161.7L300.8 158.8L300.0 157.5L297.9 156.3L295.8 155.0L293.6 153.1L292.9 152.1L292.2 150.2L290.8 149.4L288.7 150.6L287.2 151.9L285.1 151.5L283.0 151.7L282.3 153.1L282.6 154.3L280.8 155.6L279.1 156.0L278.0 157.8L277.6 158.8L278.3 160.2L277.0 162.2L275.2 163.6L271.6 163.8L270.3 164.9L269.0 163.6L267.3 162.9L265.3 163.3L265.5 161.1L264.5 160.0L265.5 156.9L265.5 155.0L264.8 152.1L266.6 150.8L269.5 151.0L272.3 151.4L275.9 151.4L276.3 149.2L276.3 146.2L275.2 144.5L274.4 143.5L271.6 142.2L271.3 141.1L273.7 140.3L275.9 140.5L276.2 138.5L278.3 138.7L280.1 137.2L280.6 135.4L282.3 134.7L283.7 133.6L284.8 131.3L285.1 130.3L288.0 129.4L290.4 128.6L290.4 127.2L289.7 124.7L289.5 120.9L292.9 119.0L292.9 122.9L292.2 124.7L293.6 127.2L293.6 128.4L295.8 127.2L297.9 128.4L300.8 127.7L304.3 126.4L305.7 127.2L307.9 125.9L307.9 122.2L309.0 119.5L310.0 119.0L312.1 120.9L312.6 117.4L311.4 116.9L311.4 114.9L312.6 114.4L317.8 114.1L320.7 112.7L317.8 111.3L313.6 112.1L310.0 112.7L308.6 108.3L308.6 102.2L310.7 100.5L314.3 97.2L312.1 94.5L309.3 94.9L307.9 98.9L305.0 102.2L302.9 105.3L302.2 109.8L304.3 112.7L303.6 115.5L301.5 119.5L301.5 120.9L300.0 122.9L298.3 124.7L296.5 124.9L295.8 122.2L294.8 118.2L293.6 115.5L292.9 114.1L292.2 115.5L289.4 117.9L286.5 118.2L285.8 116.0L285.1 111.3L285.1 106.8L288.0 103.7L290.8 102.2L292.2 100.5L293.6 97.2L295.8 93.8L297.9 88.4L297.9 86.5L300.8 82.6L302.2 80.6L305.0 78.6L307.9 77.7L311.4 74.3L314.7 73.9L317.8 74.3L321.4 78.6L324.9 81.4L329.2 82.6L336.3 88.4L334.9 92.0L332.0 93.8L327.5 93.8L327.5 98.9L329.9 100.5L331.3 98.2L330.6 95.5L334.9 98.9L336.3 95.5L340.6 92.8L340.6 84.6L343.4 86.5L346.3 87.7L353.4 84.6L356.2 85.4L361.9 84.6L364.0 79.4L369.0 81.4L371.9 82.6L373.3 76.5L373.0 72.1L374.7 67.5L377.6 65.1L381.1 67.5L381.1 74.3L380.4 91.0L382.5 86.5L383.2 84.6L382.5 78.6L384.0 74.3L386.1 69.8L388.9 68.4L387.5 67.5L391.8 62.6L394.6 62.6L401.7 60.6L400.3 57.5L401.7 53.7L406.0 51.4L413.1 49.1L420.2 47.3L425.9 38.5L430.2 43.0L437.3 49.1L438.0 54.8L438.7 62.6L443.0 62.6L448.7 65.1L454.4 62.6L458.6 62.6L461.5 65.1L462.9 74.3L467.2 72.1L471.4 72.1L477.1 67.5L485.6 68.4L491.3 72.1L494.2 75.2L499.9 74.3L505.6 78.6L509.8 79.8L515.5 80.6L519.8 79.4L522.6 81.9L528.3 80.6L534.0 83.0L539.7 87.3L542.5 90.2L545.4 92.0L548.6 93.5L545.4 97.2L544.0 98.9L539.7 98.6L536.8 97.2L535.4 103.7L532.6 105.3L529.7 105.3L525.5 107.4L522.6 109.8L519.8 112.7L515.5 112.7L514.1 112.7L510.5 113.3L509.8 118.2L508.4 119.5L508.4 123.4L505.6 128.4L503.4 131.3L500.9 135.4L499.9 130.8L499.2 124.7L499.2 120.9L501.3 118.2L503.4 118.2L505.6 112.7L508.4 108.3L505.6 108.3L499.9 108.3L497.0 114.1L494.2 114.7L489.9 114.7L485.6 114.7L481.4 114.7L477.8 119.5L474.3 125.9L472.8 128.4L475.7 127.9L478.5 130.8L477.8 135.4L478.5 139.8L477.8 142.0L474.3 146.2L471.4 150.2L468.6 152.1L465.7 151.7L464.3 153.1L462.9 153.5L462.2 156.9L460.0 158.8L460.8 161.5L461.9 163.3L462.2 165.9L459.3 167.5L457.6 167.7L457.9 165.8L457.5 163.3L457.9 162.4L455.8 161.5L456.2 158.8L454.8 157.8L451.5 159.7L450.8 159.7L450.8 156.3L448.7 157.5L447.2 159.3L445.8 159.7L445.5 161.5L447.2 162.9L449.7 162.2L452.2 163.3L450.1 164.2L448.7 165.9L447.5 167.7L449.4 170.2L451.2 172.4L451.2 173.9L451.5 175.6L450.8 177.7L449.4 179.3L448.7 180.9L448.0 182.5L446.5 184.0L444.4 185.6L442.3 186.7L439.4 187.6L437.3 188.2L435.9 188.7L434.9 189.7L434.4 190.5L434.0 188.7L432.3 188.5L429.8 189.9L428.8 191.7L428.3 193.2L429.5 194.7L431.9 196.9L432.7 198.0L433.4 201.4L433.3 203.5L431.6 204.5L430.2 205.3L429.2 206.4L427.0 207.7L427.3 206.0L427.0 205.1L425.2 204.8L423.8 202.8L423.1 202.4L421.4 201.8L421.5 200.6L420.2 200.9L419.2 205.0L419.1 206.9L420.6 208.2L420.9 209.6L422.4 210.3L423.5 211.3L425.1 213.2L425.2 215.7L425.9 217.2L426.2 218.2L425.2 218.2L423.5 216.9L422.1 215.9L421.2 214.4L420.8 212.9L420.6 211.0L419.9 210.3L418.1 208.6L417.8 207.9L417.7 205.7L418.2 203.5L418.2 200.6L417.1 198.4L416.7 196.2L415.2 195.8L413.7 197.2L412.8 196.9L412.0 196.9L412.4 194.7L412.4 191.7L411.0 191.0L409.6 189.4L408.8 188.2L408.1 187.0L406.7 187.6L406.0 188.1L404.6 187.9L403.2 187.9L401.7 188.7L401.6 189.7L401.0 191.0L398.9 192.0L398.2 193.2L396.8 194.4L395.0 196.2L393.6 197.2L392.1 197.7L392.1 200.6L392.1 201.4L391.5 203.5L391.5 205.3L390.4 205.4L389.2 207.3L388.2 208.4L386.8 207.1L386.1 205.0L385.1 203.1L384.0 200.6L383.2 198.4L382.5 196.2L381.8 192.5L381.5 189.1L381.1 187.5L380.4 189.0L378.3 189.7L376.1 187.5L377.6 187.1L375.4 185.6L374.0 185.1L373.3 183.6L372.6 182.6L369.7 182.9L366.2 183.1L363.3 182.6L359.8 182.2L358.8 180.1L358.4 179.9L356.2 180.6L354.8 180.7L352.7 179.3L351.2 178.8L349.8 176.9L349.1 174.9L347.7 174.7L346.3 176.1L347.0 178.5L348.4 180.1L349.4 180.9L349.8 183.3L350.5 184.0L351.2 182.5L351.4 184.4L352.7 184.5L354.8 184.5L355.5 184.5L356.9 182.5L358.1 181.2L358.2 183.6L359.1 184.8L361.2 185.4L363.0 187.1L361.9 189.0L361.2 190.2L360.2 192.5L358.8 193.1L356.9 194.3L356.2 195.5L353.4 196.2L352.0 197.7L349.1 198.4L347.0 199.9L344.8 200.6L342.0 201.6L339.9 201.8L339.4 200.6L338.7 197.7L338.4 196.2L337.0 194.0L336.3 192.5L334.9 190.2L333.5 187.9L332.8 184.8L330.6 182.5L329.9 180.9L328.5 178.5L327.8 178.5L327.2 176.1L326.4 178.5L325.6 178.5L324.4 175.4ZM295.6 161.3L300.2 161.0L299.5 163.8L295.8 162.2ZM289.7 156.0L291.9 156.0L291.7 159.7L290.1 159.7ZM290.2 152.3L291.5 152.3L291.4 155.2L290.5 154.8ZM311.4 165.8L315.4 166.5L312.8 167.0L311.4 166.3ZM323.9 166.8L327.1 165.8L326.1 167.7L324.2 167.3ZM269.9 137.4L273.7 136.1L276.6 135.9L280.0 135.0L280.4 131.5L278.4 129.6L277.3 127.2L275.9 125.9L275.2 123.4L275.4 119.3L273.7 116.6L270.9 116.6L269.5 119.5L270.0 123.4L270.0 125.2L271.2 126.4L273.7 127.2L273.7 128.4L273.7 130.1L271.3 130.1L272.0 132.0L270.5 133.6L273.7 134.5L271.6 135.4L269.9 137.4ZM269.5 129.6L269.2 132.7L265.9 134.0L263.4 133.6L264.1 129.6L263.8 127.9L266.3 125.4L269.5 125.4L270.2 127.7L269.5 129.6ZM293.6 32.9L299.3 43.0L303.6 46.1L309.3 36.4L316.4 25.5L306.4 17.3L293.6 23.1ZM352.0 72.1L359.1 76.1L357.6 65.1L363.3 54.8L374.7 44.3L367.6 46.1L356.2 57.5L352.0 67.5ZM413.1 32.9L427.3 30.8L420.2 17.3L408.8 21.5ZM471.4 57.5L491.3 52.0L480.0 47.9L472.8 52.0ZM532.6 72.1L538.3 73.4L531.2 75.2ZM342.0 17.3L363.3 11.0L356.2 23.1L346.3 23.1ZM480.0 127.9L481.8 133.1L482.1 139.8L480.7 146.2L479.8 145.1L480.2 139.8L479.5 132.0ZM464.2 168.5L467.2 167.7L470.0 167.5L472.8 167.5L475.7 167.0L478.2 165.6L478.5 162.4L480.0 158.8L479.2 155.2L477.1 156.3L477.1 158.8L475.7 161.9L472.6 162.9L471.4 165.4L467.2 165.9L464.3 167.5ZM477.1 155.0L478.8 154.4L484.9 151.5L483.5 150.2L479.5 147.4L478.5 151.7ZM462.5 169.4L465.3 168.9L465.0 172.8L463.2 173.3L462.2 170.6ZM466.4 170.2L469.3 168.2L468.9 169.9L467.2 170.7ZM450.1 182.9L451.5 183.3L449.8 187.9L448.7 186.1ZM432.5 192.2L435.2 190.8L435.9 191.7L433.7 193.7ZM449.4 193.2L451.9 193.4L451.5 196.2L450.8 198.4L451.5 199.9L454.4 201.4L453.6 200.2L450.8 200.2L449.4 199.2L448.7 196.9ZM451.5 203.5L456.5 203.5L455.8 206.0L452.2 206.0ZM451.5 210.0L455.8 211.7L457.9 210.0L457.2 206.4L454.4 207.4L453.6 208.6ZM391.5 206.0L394.3 209.3L393.9 211.0L391.9 211.5L391.5 208.6ZM413.5 212.0L417.4 214.3L420.9 217.2L425.2 220.7L426.6 221.4L428.8 224.3L428.5 228.3L426.6 228.4L423.5 225.7L420.6 221.4L418.4 217.4L415.2 215.0ZM427.6 229.7L431.6 228.8L435.9 229.3L440.8 231.0L440.8 232.4L434.4 231.6L428.8 230.6ZM441.6 231.8L447.2 231.7L452.9 231.8L452.9 232.6L447.2 232.6L441.6 232.7ZM433.0 217.9L434.0 217.2L435.9 217.7L438.7 215.4L442.3 212.6L444.4 210.0L447.5 212.5L445.8 213.6L445.8 218.6L445.1 220.0L443.7 223.6L443.0 225.7L440.8 225.0L435.9 224.3L434.4 222.1L433.3 220.0ZM448.0 227.8L448.0 225.0L449.1 223.6L448.7 219.6L449.4 219.0L455.1 218.2L450.1 219.3L453.6 221.1L450.8 222.1L452.2 227.1L450.1 225.7L449.4 227.8ZM459.3 217.2L460.8 219.3L460.0 221.1L459.0 220.0ZM464.3 222.1L468.6 221.1L470.7 224.7L474.3 222.4L478.5 223.7L485.2 226.7L487.8 228.5L488.2 231.4L492.3 235.0L490.6 234.7L486.4 232.4L482.1 232.9L480.8 233.3L477.8 232.9L474.3 231.8L474.3 229.3L473.6 227.1L469.3 225.7L466.4 225.4L465.7 224.0L464.3 222.1ZM489.2 227.8L494.2 226.0L493.5 227.8L491.3 228.8ZM454.4 234.0L458.6 232.0L455.8 233.0ZM480.7 235.3L482.1 240.1L484.6 241.6L485.6 246.8L487.8 248.3L489.9 251.3L492.8 254.4L495.9 257.5L496.5 262.3L495.6 266.4L494.9 268.9L492.8 272.0L491.3 277.6L487.8 278.5L486.1 280.5L483.5 278.9L479.2 279.0L476.5 276.7L474.3 274.1L474.3 271.8L473.6 270.1L471.4 272.9L470.4 272.3L469.0 269.4L464.3 267.2L457.2 268.6L454.4 269.8L450.8 271.1L445.8 273.2L441.6 271.8L442.4 270.3L442.6 267.2L441.4 263.1L439.3 258.3L440.1 252.1L443.7 250.1L448.7 249.0L452.2 244.5L456.5 240.8L458.6 240.1L462.2 241.6L462.9 238.6L466.4 236.5L472.1 237.2L472.1 239.4L470.7 241.6L475.7 244.5L478.2 245.3L479.2 238.6L480.7 235.3ZM483.8 283.5L488.9 283.8L488.8 286.3L487.1 289.0L484.9 286.9ZM523.6 272.3L526.2 274.9L528.3 277.8L531.9 278.0L531.0 280.7L529.6 281.4L527.2 285.2L526.3 284.4L526.9 281.2L525.2 280.7L526.3 277.6L524.3 273.7ZM523.6 283.1L525.9 285.4L524.0 289.4L521.5 290.8L520.9 293.6L517.6 295.1L514.8 293.8L515.1 291.8L517.4 289.8L520.9 286.7L522.8 283.8ZM157.1 188.1L161.4 186.1L168.5 187.6L172.5 190.7L167.8 191.3L166.4 188.7L161.4 187.9L157.8 189.0ZM172.0 193.2L174.9 191.1L180.9 193.1L177.0 194.4L172.2 193.7ZM166.6 193.4L169.6 193.7L168.5 194.3ZM182.4 193.2L184.7 193.4L184.1 194.0ZM22.0 475.2L22.0 403.6L50.4 400.2L64.7 393.9L78.9 385.2L93.1 380.9L107.3 378.9L121.6 379.9L135.8 377.4L150.0 374.9L164.2 377.4L171.3 365.7L181.3 351.6L184.1 346.2L188.4 341.1L196.9 337.2L194.1 341.1L189.8 348.0L187.0 355.4L191.2 365.7L192.7 379.9L206.9 400.2L228.2 403.6L242.4 385.2L256.7 372.5L270.9 365.7L285.1 362.3L299.3 361.4L313.6 362.7L327.8 359.4L334.9 356.6L342.0 352.7L356.2 348.0L370.4 351.6L377.6 355.4L384.7 359.4L391.8 351.6L406.0 348.0L420.2 346.2L434.4 346.9L448.7 348.0L462.9 347.2L477.1 348.7L491.3 355.4L505.6 361.4L516.9 370.2L519.8 374.9L512.7 390.9L519.8 403.6L534.0 403.6L534.0 475.2ZM-188.1 173.3L-185.4 173.1L-184.2 170.6L-183.5 167.7L-182.9 165.9L-182.5 164.0L-184.2 163.8L-185.6 164.5L-187.8 164.9L-190.6 164.0L-192.8 164.0L-194.2 163.6L-195.2 162.4L-195.6 160.6L-196.3 160.6L-195.9 158.8L-196.7 157.8L-196.3 156.5L-197.0 156.3L-199.9 156.5L-201.3 157.3L-201.7 158.8L-201.0 160.6L-199.9 161.1L-201.3 161.7L-202.0 164.2L-203.1 163.5L-203.8 161.9L-203.8 161.0L-205.1 158.8L-206.3 156.9L-206.3 154.4L-207.7 153.1L-209.8 151.7L-211.2 151.2L-212.7 149.6L-213.4 147.8L-214.5 147.0L-216.5 147.4L-216.2 149.2L-214.7 151.2L-213.4 153.7L-211.2 155.0L-209.1 156.3L-207.7 157.5L-208.4 158.0L-209.8 159.7L-210.4 160.8L-211.2 161.5L-211.7 161.7L-211.2 158.8L-212.0 157.5L-214.1 156.3L-216.2 155.0L-218.4 153.1L-219.1 152.1L-219.8 150.2L-221.2 149.4L-223.3 150.6L-224.8 151.9L-226.9 151.5L-229.0 151.7L-229.7 153.1L-229.4 154.3L-231.2 155.6L-232.9 156.0L-234.0 157.8L-234.4 158.8L-233.7 160.2L-235.0 162.2L-236.8 163.6L-240.4 163.8L-241.7 164.9L-243.0 163.6L-244.7 162.9L-246.7 163.3L-246.5 161.1L-247.5 160.0L-246.5 156.9L-246.5 155.0L-247.2 152.1L-245.4 150.8L-242.5 151.0L-239.7 151.4L-236.1 151.4L-235.7 149.2L-235.7 146.2L-236.8 144.5L-237.6 143.5L-240.4 142.2L-240.7 141.1L-238.3 140.3L-236.1 140.5L-235.8 138.5L-233.7 138.7L-231.9 137.2L-231.4 135.4L-229.7 134.7L-228.3 133.6L-227.2 131.3L-226.9 130.3L-224.0 129.4L-221.6 128.6L-221.6 127.2L-222.3 124.7L-222.5 120.9L-219.1 119.0L-219.1 122.9L-219.8 124.7L-218.4 127.2L-218.4 128.4L-216.2 127.2L-214.1 128.4L-211.2 127.7L-207.7 126.4L-206.3 127.2L-204.1 125.9L-204.1 122.2L-203.0 119.5L-202.0 119.0L-199.9 120.9L-199.4 117.4L-200.6 116.9L-200.6 114.9L-199.4 114.4L-194.2 114.1L-191.3 112.7L-194.2 111.3L-198.4 112.1L-202.0 112.7L-203.4 108.3L-203.4 102.2L-201.3 100.5L-197.7 97.2L-199.9 94.5L-202.7 94.9L-204.1 98.9L-207.0 102.2L-209.1 105.3L-209.8 109.8L-207.7 112.7L-208.4 115.5L-210.5 119.5L-210.5 120.9L-212.0 122.9L-213.7 124.7L-215.5 124.9L-216.2 122.2L-217.2 118.2L-218.4 115.5L-219.1 114.1L-219.8 115.5L-222.6 117.9L-225.5 118.2L-226.2 116.0L-226.9 111.3L-226.9 106.8L-224.0 103.7L-221.2 102.2L-219.8 100.5L-218.4 97.2L-216.2 93.8L-214.1 88.4L-214.1 86.5L-211.2 82.6L-209.8 80.6L-207.0 78.6L-204.1 77.7L-200.6 74.3L-197.3 73.9L-194.2 74.3L-190.6 78.6L-187.1 81.4L-182.8 82.6L-175.7 88.4L-177.1 92.0L-180.0 93.8L-184.5 93.8L-184.5 98.9L-182.1 100.5L-180.7 98.2L-181.4 95.5L-177.1 98.9L-175.7 95.5L-171.4 92.8L-171.4 84.6L-168.6 86.5L-165.7 87.7L-158.6 84.6L-155.8 85.4L-150.1 84.6L-148.0 79.4L-143.0 81.4L-140.1 82.6L-138.7 76.5L-139.0 72.1L-137.3 67.5L-134.4 65.1L-130.9 67.5L-130.9 74.3L-131.6 91.0L-129.5 86.5L-128.8 84.6L-129.5 78.6L-128.0 74.3L-125.9 69.8L-123.1 68.4L-124.5 67.5L-120.2 62.6L-117.4 62.6L-110.3 60.6L-111.7 57.5L-110.3 53.7L-106.0 51.4L-98.9 49.1L-91.8 47.3L-86.1 38.5L-81.8 43.0L-74.7 49.1L-74.0 54.8L-73.3 62.6L-69.0 62.6L-63.3 65.1L-57.6 62.6L-53.4 62.6L-50.5 65.1L-49.1 74.3L-44.8 72.1L-40.6 72.1L-34.9 67.5L-26.4 68.4L-20.7 72.1L-17.8 75.2L-12.1 74.3L-6.4 78.6L-2.2 79.8L3.5 80.6L7.8 79.4L10.6 81.9L16.3 80.6L22.0 83.0L27.7 87.3L30.5 90.2L33.4 92.0L36.6 93.5L33.4 97.2L32.0 98.9L27.7 98.6L24.8 97.2L23.4 103.7L20.6 105.3L17.7 105.3L13.5 107.4L10.6 109.8L7.8 112.7L3.5 112.7L2.1 112.7L-1.5 113.3L-2.2 118.2L-3.6 119.5L-3.6 123.4L-6.4 128.4L-8.6 131.3L-11.1 135.4L-12.1 130.8L-12.8 124.7L-12.8 120.9L-10.7 118.2L-8.6 118.2L-6.4 112.7L-3.6 108.3L-6.4 108.3L-12.1 108.3L-15.0 114.1L-17.8 114.7L-22.1 114.7L-26.4 114.7L-30.6 114.7L-34.2 119.5L-37.7 125.9L-39.2 128.4L-36.3 127.9L-33.5 130.8L-34.2 135.4L-33.5 139.8L-34.2 142.0L-37.7 146.2L-40.6 150.2L-43.4 152.1L-46.3 151.7L-47.7 153.1L-49.1 153.5L-49.8 156.9L-52.0 158.8L-51.2 161.5L-50.1 163.3L-49.8 165.9L-52.7 167.5L-54.4 167.7L-54.1 165.8L-54.5 163.3L-54.1 162.4L-56.2 161.5L-55.8 158.8L-57.2 157.8L-60.5 159.7L-61.2 159.7L-61.2 156.3L-63.3 157.5L-64.8 159.3L-66.2 159.7L-66.5 161.5L-64.8 162.9L-62.3 162.2L-59.8 163.3L-61.9 164.2L-63.3 165.9L-64.5 167.7L-62.6 170.2L-60.8 172.4L-60.8 173.9L-60.5 175.6L-61.2 177.7L-62.6 179.3L-63.3 180.9L-64.0 182.5L-65.5 184.0L-67.6 185.6L-69.7 186.7L-72.6 187.6L-74.7 188.2L-76.1 188.7L-77.1 189.7L-77.6 190.5L-78.0 188.7L-79.7 188.5L-82.2 189.9L-83.2 191.7L-83.7 193.2L-82.5 194.7L-80.1 196.9L-79.3 198.0L-78.6 201.4L-78.7 203.5L-80.4 204.5L-81.8 205.3L-82.8 206.4L-85.0 207.7L-84.7 206.0L-85.0 205.1L-86.8 204.8L-88.2 202.8L-88.9 202.4L-90.6 201.8L-90.5 200.6L-91.8 200.9L-92.8 205.0L-92.9 206.9L-91.4 208.2L-91.1 209.6L-89.6 210.3L-88.5 211.3L-86.9 213.2L-86.8 215.7L-86.1 217.2L-85.8 218.2L-86.8 218.2L-88.5 216.9L-89.9 215.9L-90.8 214.4L-91.2 212.9L-91.4 211.0L-92.1 210.3L-93.9 208.6L-94.2 207.9L-94.3 205.7L-93.8 203.5L-93.8 200.6L-94.9 198.4L-95.3 196.2L-96.8 195.8L-98.3 197.2L-99.2 196.9L-100.0 196.9L-99.6 194.7L-99.6 191.7L-101.0 191.0L-102.4 189.4L-103.2 188.2L-103.9 187.0L-105.3 187.6L-106.0 188.1L-107.4 187.9L-108.8 187.9L-110.3 188.7L-110.4 189.7L-111.0 191.0L-113.1 192.0L-113.8 193.2L-115.2 194.4L-117.0 196.2L-118.4 197.2L-119.9 197.7L-119.9 200.6L-119.9 201.4L-120.5 203.5L-120.5 205.3L-121.6 205.4L-122.8 207.3L-123.8 208.4L-125.2 207.1L-125.9 205.0L-126.9 203.1L-128.0 200.6L-128.8 198.4L-129.5 196.2L-130.2 192.5L-130.5 189.1L-130.9 187.5L-131.6 189.0L-133.7 189.7L-135.9 187.5L-134.4 187.1L-136.6 185.6L-138.0 185.1L-138.7 183.6L-139.4 182.6L-142.3 182.9L-145.8 183.1L-148.7 182.6L-152.2 182.2L-153.2 180.1L-153.6 179.9L-155.8 180.6L-157.2 180.7L-159.3 179.3L-160.8 178.8L-162.2 176.9L-162.9 174.9L-164.3 174.7L-165.7 176.1L-165.0 178.5L-163.6 180.1L-162.6 180.9L-162.2 183.3L-161.5 184.0L-160.8 182.5L-160.6 184.4L-159.3 184.5L-157.2 184.5L-156.5 184.5L-155.1 182.5L-153.9 181.2L-153.8 183.6L-152.9 184.8L-150.8 185.4L-149.0 187.1L-150.1 189.0L-150.8 190.2L-151.8 192.5L-153.2 193.1L-155.1 194.3L-155.8 195.5L-158.6 196.2L-160.0 197.7L-162.9 198.4L-165.0 199.9L-167.2 200.6L-170.0 201.6L-172.1 201.8L-172.6 200.6L-173.3 197.7L-173.6 196.2L-175.0 194.0L-175.7 192.5L-177.1 190.2L-178.5 187.9L-179.2 184.8L-181.4 182.5L-182.1 180.9L-183.5 178.5L-184.2 178.5L-184.8 176.1L-185.6 178.5L-186.4 178.5L-187.6 175.4ZM20.6 72.1L26.3 73.4L19.2 75.2ZM11.6 272.3L14.2 274.9L16.3 277.8L19.9 278.0L19.0 280.7L17.6 281.4L15.2 285.2L14.3 284.4L14.9 281.2L13.2 280.7L14.3 277.6L12.3 273.7ZM11.6 283.1L13.9 285.4L12.0 289.4L9.5 290.8L8.9 293.6L5.6 295.1L2.8 293.8L3.1 291.8L5.4 289.8L8.9 286.7L10.8 283.8ZM-490.0 475.2L-490.0 403.6L-461.6 400.2L-447.3 393.9L-433.1 385.2L-418.9 380.9L-404.7 378.9L-390.4 379.9L-376.2 377.4L-362.0 374.9L-347.8 377.4L-340.7 365.7L-330.7 351.6L-327.9 346.2L-323.6 341.1L-315.1 337.2L-317.9 341.1L-322.2 348.0L-325.0 355.4L-320.8 365.7L-319.3 379.9L-305.1 400.2L-283.8 403.6L-269.6 385.2L-255.3 372.5L-241.1 365.7L-226.9 362.3L-212.7 361.4L-198.4 362.7L-184.2 359.4L-177.1 356.6L-170.0 352.7L-155.8 348.0L-141.6 351.6L-134.4 355.4L-127.3 359.4L-120.2 351.6L-106.0 348.0L-91.8 346.2L-77.6 346.9L-63.3 348.0L-49.1 347.2L-34.9 348.7L-20.7 355.4L-6.4 361.4L4.9 370.2L7.8 374.9L0.7 390.9L7.8 403.6L22.0 403.6L22.0 475.2ZM551.1 95.2L556.8 91.7L559.6 90.6L557.5 88.4L552.8 85.4L558.2 80.6L562.4 76.1L567.0 73.0L573.8 75.2L579.5 77.3L589.5 79.8L596.6 82.6L600.8 80.6L608.0 76.9L613.6 80.2L619.3 82.6L627.9 85.4L636.4 86.5L643.5 86.5L650.6 88.4L654.9 85.8L656.3 72.1L659.2 78.6L662.0 82.6L667.7 84.6L670.5 79.4L674.1 82.6L673.4 90.2L667.7 92.0L666.3 98.9L661.0 102.8L656.3 109.8L656.3 116.0L658.4 120.9L664.1 122.7L669.1 125.4L673.0 125.9L673.4 130.8L676.2 134.7L677.6 133.1L678.1 127.2L680.9 122.2L679.8 116.9L679.1 111.3L679.1 105.6L684.8 105.9L687.6 108.3L690.4 114.1L693.3 116.6L697.6 111.8L698.6 112.1L701.8 118.2L703.2 122.2L706.1 125.9L708.9 130.8L710.8 133.1L708.2 134.5L704.7 137.2L696.1 137.2L690.4 143.0L691.9 140.9L697.6 139.4L698.3 140.3L697.6 143.0L698.3 145.1L702.5 146.6L703.2 147.6L699.7 149.0L696.1 151.2L694.7 148.8L699.0 146.8L696.1 147.8L693.3 149.4L690.4 151.2L689.4 152.5L690.4 154.6L688.3 155.4L684.8 156.9L684.8 159.1L682.6 160.6L681.5 163.3L682.6 166.5L680.5 167.7L677.6 169.4L674.8 171.9L674.4 175.2L675.5 178.5L676.1 181.7L674.8 182.9L673.7 181.4L672.4 179.3L672.4 176.9L670.5 175.2L667.7 174.6L664.8 174.6L662.7 174.9L663.0 176.9L661.3 176.5L659.2 175.9L656.3 176.1L654.2 177.2L651.6 179.3L651.3 182.5L650.9 187.1L651.6 189.4L653.5 191.7L655.6 193.7L658.4 193.1L660.6 192.9L661.3 191.3L661.6 189.4L664.8 188.7L666.3 188.7L665.6 191.7L665.3 193.5L664.4 196.2L664.6 197.4L667.7 197.1L669.8 197.1L671.5 198.4L671.2 202.1L671.0 204.3L673.4 206.6L674.8 207.4L676.9 206.3L679.8 207.4L680.1 208.3L678.8 209.3L676.9 209.3L675.5 209.6L674.1 209.6L672.0 208.2L668.0 205.7L668.1 204.0L665.6 201.4L662.7 200.6L659.9 199.9L657.7 197.5L655.6 196.6L652.8 197.4L649.9 196.5L646.4 195.0L642.8 193.5L640.0 191.0L640.4 188.7L639.5 186.8L635.7 182.9L634.3 180.9L632.1 178.7L630.4 176.9L629.0 173.6L626.9 172.4L627.6 175.2L629.6 177.7L630.7 180.9L632.1 183.6L633.6 186.1L634.3 186.2L632.8 185.1L630.7 183.6L630.4 181.7L627.9 179.8L627.2 178.5L625.4 175.2L624.3 172.8L623.3 170.7L621.5 168.5L618.5 167.7L616.6 164.2L615.8 161.9L614.1 159.7L613.2 156.9L613.4 154.1L612.9 152.1L613.6 145.5L612.6 141.1L615.1 141.6L615.8 139.8L612.2 137.6L608.7 135.9L608.0 134.3L605.1 127.2L603.7 124.7L600.8 120.9L598.0 116.9L595.2 116.0L590.9 113.3L586.6 112.4L582.4 110.4L579.5 111.5L576.7 109.2L574.2 111.3L574.2 114.9L571.0 118.2L568.1 120.9L565.3 122.2L562.4 123.9L558.2 125.9L556.0 127.2L558.2 125.2L561.0 122.9L564.6 119.5L566.0 116.9L562.4 116.3L559.6 113.5L556.8 112.7L554.9 110.4L555.3 105.3L556.0 103.1L561.0 99.6L559.6 98.6L555.3 98.9L553.2 96.6L551.1 95.2ZM534.0 475.2L534.0 403.6L562.4 400.2L576.7 393.9L590.9 385.2L605.1 380.9L619.3 378.9L633.6 379.9L647.8 377.4L662.0 374.9L676.2 377.4L683.3 365.7L693.3 351.6L696.1 346.2L700.4 341.1L708.9 337.2L706.1 341.1L701.8 348.0L699.0 355.4L703.2 365.7L704.7 379.9L718.9 400.2L740.2 403.6L754.4 385.2L768.7 372.5L782.9 365.7L797.1 362.3L811.3 361.4L825.6 362.7L839.8 359.4L846.9 356.6L854.0 352.7L868.2 348.0L882.4 351.6L889.6 355.4L896.7 359.4L903.8 351.6L918.0 348.0L932.2 346.2L946.4 346.9L960.7 348.0L974.9 347.2L989.1 348.7L1003.3 355.4L1017.6 361.4L1028.9 370.2L1031.8 374.9L1024.7 390.9L1031.8 403.6L1046.0 403.6L1046.0 475.2ZM140.7 20.8L143.8 11.4L148.0 6.2L156.3 1.0L160.4 -0.5L190.5 -0.5L187.4 5.2L182.2 15.6L177.0 23.9L172.9 31.1L168.7 39.4L166.7 43.1L158.4 41.5L152.1 40.5L153.2 34.3L145.9 34.3L141.8 29.1ZM150.6 44.6L156.3 42.6L166.7 44.1L165.6 49.8L164.6 58.1L156.3 58.1L150.1 58.1L150.6 51.9ZM139.7 44.6L145.9 43.6L148.0 48.8L146.9 57.1L141.8 58.1L139.7 51.9ZM129.3 46.7L135.5 45.7L138.6 49.8L138.6 56.1L132.4 56.1L129.3 51.9ZM103.3 48.8L109.6 41.5L113.7 42.6L111.6 48.8L116.8 47.8L121.0 45.7L127.2 50.9L127.2 56.1L118.9 58.1L111.6 56.1L106.5 54.0ZM114.8 36.3L121.0 32.2L123.1 39.4L117.9 41.5L115.8 39.4ZM128.3 28.0L135.5 31.1L136.6 39.4L131.4 38.4ZM138.6 32.2L142.8 34.3L142.8 39.4L139.7 38.4ZM100.2 60.2L106.5 58.1L112.7 61.2L114.8 66.4L110.6 72.7L103.3 74.7L99.2 70.6ZM109.6 66.4L116.8 64.4L125.1 62.3L129.3 66.4L128.3 74.7L131.4 81.0L109.6 81.0L110.6 72.7ZM132.4 64.4L137.6 61.2L140.7 66.4L138.6 74.7L134.5 71.6ZM141.8 61.2L149.0 60.2L149.0 67.5L143.8 72.7L141.8 67.5ZM151.1 64.4L156.3 62.3L166.7 62.3L172.9 67.5L179.1 74.7L182.2 81.0L152.1 81.0L153.2 72.7Z"/><path fill="none" stroke="#f1ddca" stroke-width="0.6" d="M77.5 80.2L77.5 111.8M102.6 139.8L142.6 139.8L150.6 142.0L157.8 145.1L160.7 147.6L160.0 154.1L165.6 151.5L171.3 148.2L176.3 148.2L179.6 143.2L181.6 143.9L182.7 148.2M111.5 171.1L114.9 170.7L120.1 173.1L124.1 173.1L126.5 172.3L129.4 175.9L131.5 176.9L133.8 175.6L136.5 179.3L139.8 181.8M270.9 151.4L282.6 153.1M280.6 135.4L286.5 138.7L288.7 142.8L292.9 143.0L296.5 140.9L299.3 135.4L298.2 128.6M311.4 128.4L312.1 136.5L310.0 141.6L315.7 141.6L318.1 147.2M320.7 112.7L317.8 123.4L323.5 133.1L332.0 137.6L334.9 142.0L334.2 144.1M327.1 80.6L319.2 82.6L318.5 93.8L321.4 106.8M401.7 139.8L391.8 148.2L381.8 157.8L379.0 163.3L384.7 166.8M349.1 157.8L356.2 148.2L366.2 150.2L381.8 148.2L391.8 154.1L401.7 139.8L406.0 137.6L417.4 133.1L431.6 137.6L443.0 138.7L448.7 130.8L458.6 137.6L464.3 144.1L469.3 142.0L464.3 153.1M366.2 183.1L367.6 177.7L364.8 173.6L364.8 166.8L371.9 162.4L379.0 163.3M384.7 166.8L388.9 166.8L391.8 171.9L393.2 175.2L403.2 178.8L408.8 180.1L416.0 178.5M174.2 210.0L178.4 218.6L185.6 224.3L192.7 234.3L195.5 241.6L196.1 249.0L200.3 257.5L196.9 264.8L202.2 271.0M178.4 246.5L179.9 252.1L182.7 253.6L180.6 259.9L178.4 269.8L176.3 282.2L176.3 291.8L175.6 300.2L180.6 307.6"/><path fill="none" stroke="#e3b58e" stroke-width="1.2" stroke-dasharray="2 1.5" d="M44.0 127.2L41.2 128.9L38.4 130.3L36.2 131.3L33.4 132.4L30.5 133.1L27.7 133.6L24.8 133.8L22.0 133.6L19.2 133.1L16.3 132.0L13.5 131.3L11.3 130.8M556.0 127.2L553.2 128.9L550.4 130.3L548.2 131.3L545.4 132.4L542.5 133.1L539.7 133.6L536.8 133.8L534.0 133.6L531.2 133.1L528.3 132.0L525.5 131.3L523.3 130.8"/><path fill="#c8c8c8" stroke="#e9c9a8" stroke-width="0.6" d="M344.8 149.2L347.0 146.2L348.4 145.1L350.5 144.1L353.4 144.1L354.1 147.2L351.2 149.2L349.8 150.2L351.2 152.1L353.0 154.1L353.4 156.0L354.1 157.8L353.4 160.6L354.1 163.3L350.5 163.6L349.1 162.8L347.7 161.5L347.7 159.7L348.4 156.9L347.7 156.0L346.3 154.1L345.6 152.1ZM317.8 155.6L317.8 153.1L318.1 151.2L319.0 149.2L320.2 147.8L321.4 145.5L322.8 144.9L324.2 146.2L325.6 146.6L324.5 147.4L325.6 149.2L327.8 148.6L329.9 147.6L328.2 146.8L329.9 145.1L332.3 143.9L333.9 143.9L332.8 145.1L331.8 146.2L332.0 147.6L331.3 148.8L332.8 149.6L334.6 151.2L337.0 154.1L337.0 155.4L334.9 156.0L332.0 156.0L329.2 154.6L327.8 154.1L324.9 154.1L322.1 155.4L319.2 155.6Z"/></svg><!--/MAP-->
<div class="a" style="left:126px;top:640px;width:392px;height:112px;border-radius:5px;background:rgba(255,255,255,0.73)"></div>
<div class="a" style="left:141px;top:655px;font-size:19px;line-height:19px;color:#222;-webkit-text-stroke:0.6px #222">Data Placement (In AZs)</div>
<svg class="a" style="left:136px;top:684px" width="32" height="34" viewBox="-1 -1.5 32 34"><g><path d="M0 3.2 C0 -1 21.4 -1 21.4 3.2 L21.4 21.7 C21.4 25.9 0 25.9 0 21.7 Z" fill="#ea4a1c" stroke="#1b1e45" stroke-width="1.3"/>
<ellipse cx="10.7" cy="3.2" rx="10.7" ry="3.2" fill="#ea4a1c" stroke="#1b1e45" stroke-width="1.3"/>
<path d="M0 11.3 C0 15.5 21.4 15.5 21.4 11.3 M0 17.5 C0 21.7 21.4 21.7 21.4 17.5" fill="none" stroke="#1b1e45" stroke-width="1.3"/></g><circle cx="20.2" cy="22.4" r="7.8" fill="#1b1e45"/><path d="M16.5 22.5 L19.2 25.2 L23.8 19.5" fill="none" stroke="#fff" stroke-width="1.9"/></svg>
<div class="a" style="left:177px;top:684px;font-size:17px;line-height:17px;font-weight:bold;color:#222;letter-spacing:-0.45px">Primary Data</div>
<div class="a" style="left:178px;top:707px;width:67px;height:16px;border-radius:2px;background:#383f86;color:#fff;font-size:11px;line-height:16px;text-align:center;font-weight:bold">Kubernetes</div>
<div class="a" style="left:178px;top:726px;font-size:13.5px;line-height:14px;color:#333">1 Region, 3 AZS, 3 Pods</div>
<svg class="a" style="left:339px;top:684px" width="32" height="34" viewBox="-1 -1.5 32 34"><g><path d="M0 3.2 C0 -1 21.4 -1 21.4 3.2 L21.4 21.7 C21.4 25.9 0 25.9 0 21.7 Z" fill="#4c9e47" stroke="#1b1e45" stroke-width="1.3"/>
<ellipse cx="10.7" cy="3.2" rx="10.7" ry="3.2" fill="#4c9e47" stroke="#1b1e45" stroke-width="1.3"/>
<path d="M0 11.3 C0 15.5 21.4 15.5 21.4 11.3 M0 17.5 C0 21.7 21.4 21.7 21.4 17.5" fill="none" stroke="#1b1e45" stroke-width="1.3"/></g><circle cx="20.3" cy="22.4" r="7.8" fill="#1b1e45"/><path d="M16.3 21 C17 18.5 21.5 18 23.5 20 M23.8 17.8 L23.8 20.6 L21 20.6 M24.3 23.8 C23.6 26.3 19.1 26.8 17.1 24.8 M16.8 27 L16.8 24.2 L19.6 24.2" fill="none" stroke="#fff" stroke-width="1.5"/></svg>
<div class="a" style="left:380px;top:684px;font-size:17px;line-height:17px;font-weight:bold;color:#222;letter-spacing:-0.75px">Read Replica</div>
<div class="a" style="left:381px;top:705px;font-size:14px;line-height:14px;color:#333">None</div>
<div class="a" style="left:415px;top:746px;width:271px;height:16px;background:rgba(255,255,255,0.8)"></div>
<div class="a" style="left:420px;top:748px;font-size:11.4px;line-height:12px;font-weight:bold;color:#111"><span style="color:#0078a8">Leaflet</span> | Copyright &copy; MapBox All rights reserved</div>
<svg class="a" style="left:488px;top:570px" width="46" height="46" viewBox="488 570 46 46">
<defs><filter id="bl" x="-50%" y="-50%" width="200%" height="200%"><feGaussianBlur stdDeviation="2.5"/></filter></defs>
<ellipse cx="524" cy="598" rx="7" ry="10" fill="rgba(0,0,0,0.45)" filter="url(#bl)"/>
<g transform="translate(495.5 573.5) scale(1.27 1.0)"><g><path d="M0 3.2 C0 -1 21.4 -1 21.4 3.2 L21.4 21.7 C21.4 25.9 0 25.9 0 21.7 Z" fill="#ef4a1c" stroke="#1b1e45" stroke-width="1.3"/>
<ellipse cx="10.7" cy="3.2" rx="10.7" ry="3.2" fill="#ef4a1c" stroke="#1b1e45" stroke-width="1.3"/>
<path d="M0 11.3 C0 15.5 21.4 15.5 21.4 11.3 M0 17.5 C0 21.7 21.4 21.7 21.4 17.5" fill="none" stroke="#1b1e45" stroke-width="1.3"/></g></g>
<g transform="translate(492.5 578.5) scale(1.17 1.17)"><g><path d="M0 3.2 C0 -1 21.4 -1 21.4 3.2 L21.4 21.7 C21.4 25.9 0 25.9 0 21.7 Z" fill="#ef4a1c" stroke="#1b1e45" stroke-width="1.3"/>
<ellipse cx="10.7" cy="3.2" rx="10.7" ry="3.2" fill="#ef4a1c" stroke="#1b1e45" stroke-width="1.3"/>
<path d="M0 11.3 C0 15.5 21.4 15.5 21.4 11.3 M0 17.5 C0 21.7 21.4 21.7 21.4 17.5" fill="none" stroke="#1b1e45" stroke-width="1.3"/></g></g>
<circle cx="519.7" cy="603" r="10" fill="#1b1e45"/><path d="M514.5 603.5 L518 607 L523.5 599.5" fill="none" stroke="#fff" stroke-width="2.3"/>
</svg>
<!-- Cost -->
<div class="a" style="left:779px;top:203px;font-size:34px;line-height:34px;color:#202461;letter-spacing:1px;-webkit-text-stroke:0.5px #202461">$0.00</div>
<div class="a" style="left:878px;top:218px;font-size:19px;line-height:19px;color:#3b3f7a">/day</div>
<div class="a" style="left:805px;top:273px;font-size:13.5px;line-height:14px;color:#333;letter-spacing:0.35px">$0.00 /month</div>
<!-- CPU -->
<svg class="a" style="left:1097px;top:212px" width="94" height="60" viewBox="1097 212 94 60"><path d="M1109.5 258 A34.5 34.5 0 0 1 1178.5 258" fill="none" stroke="#e1e1e6" stroke-width="11" stroke-linecap="round"/></svg>
<div class="a" style="left:1007px;width:273px;text-align:center;top:280.5px;font-size:13.5px;line-height:14px;color:#999">No Data</div>
<!-- Health -->
<svg class="a" style="left:1559px;top:214px" width="60" height="52" viewBox="0 0 60 52"><path d="M30 51.5 L6 28 C-0.5 21.5 0.5 9 7 4.5 C13 0 22 1 27 6 L30 9 L33 6 C38 1 47 0 53 4.5 C59.5 9 60.5 21.5 54 28 Z" fill="#e0e0e4"/></svg>
<div class="a" style="left:1304px;width:570px;text-align:center;top:281px;font-size:13.5px;line-height:14px;color:#999;letter-spacing:0.17px">No finished checks</div>
<!-- PV stats -->
<div class="a" style="left:1323px;top:415px;font-size:34px;line-height:34px;color:#202461;-webkit-text-stroke:0.5px #202461">No Data</div>
<div class="a" style="left:1324px;top:465px;font-size:13.5px;line-height:14px;color:#888">Data is unavailable</div>
<div class="a" style="left:1324px;top:491px;width:530px;height:30px;border-radius:5px;background:#e1e1e6"></div>
<div class="a" style="left:1334px;top:498px;width:26px;height:16px;border-radius:2px;background:#b3b3b8;color:#fff;font-weight:bold;font-size:12px;line-height:16px;text-align:center">0%</div>
<!-- Tables -->
<div class="big" style="left:1362px;width:100px;top:661px">0</div>
<div class="sub" style="left:1362px;width:100px;top:700px;font-size:14px">YSQL</div>
<div class="big" style="left:1539px;width:100px;top:661px">0</div>
<div class="sub" style="left:1539px;width:100px;top:700px;font-size:14px">YCQL</div>
<div class="big" style="left:1716px;width:100px;top:661px">0</div>
<div class="sub" style="left:1716px;width:100px;top:700px;font-size:14px">YEDIS</div>
<!-- refresh icons -->
<svg class="a" style="left:838px;top:373px" width="13" height="13" viewBox="0 0 512 512"><path fill="#9a9a9a" d="M65.9 228.5C79.2 135.5 159.3 64 256 64c53 0 101 21.5 135.8 56.2l.6.6 7.6 7.2h-47.9c-17.7 0-32 14.3-32 32s14.3 32 32 32h128c17.7 0 32-14.3 32-32V32c0-17.7-14.3-32-32-32s-32 14.3-32 32v53.4l-11.3-10.7C390.5 28.6 326.5 0 256 0 127 0 20.3 95.4 2.6 219.5c-2.5 17.5 9.6 33.7 27.1 36.2s33.7-9.7 36.2-27.1zm443.5 64c2.5-17.5-9.7-33.7-27.1-36.2s-33.7 9.7-36.2 27.1c-13.3 93-93.4 164.5-190.1 164.5-53 0-101-21.5-135.8-56.2l-.6-.6-7.6-7.2h47.9c17.700 0 32-14.3 32-32s-14.3-32-32-32L32 320c-8.5 0-16.7 3.4-22.7 9.5S-.1 343.7 0 352.3l1 127c.1 17.700 14.6 31.9 32.3 31.700s31.900-14.600 31.700-32.300l-.4-51.500 10.700 10.100C121.600 483.400 185.500 512 256 512c129 0 235.700-95.400 253.400-219.500"/></svg>
<svg class="a" style="left:880px;top:588px" width="13" height="13" viewBox="0 0 512 512"><path fill="#9a9a9a" d="M65.9 228.5C79.2 135.5 159.3 64 256 64c53 0 101 21.5 135.8 56.2l.6.6 7.6 7.2h-47.9c-17.7 0-32 14.3-32 32s14.3 32 32 32h128c17.7 0 32-14.3 32-32V32c0-17.7-14.3-32-32-32s-32 14.3-32 32v53.4l-11.3-10.7C390.5 28.6 326.5 0 256 0 127 0 20.3 95.4 2.6 219.5c-2.5 17.5 9.6 33.7 27.1 36.2s33.7-9.7 36.2-27.1zm443.5 64c2.5-17.5-9.7-33.7-27.1-36.2s-33.7 9.7-36.2 27.1c-13.3 93-93.4 164.5-190.1 164.5-53 0-101-21.5-135.8-56.2l-.6-.6-7.6-7.2h47.9c17.700 0 32-14.3 32-32s-14.3-32-32-32L32 320c-8.5 0-16.7 3.4-22.7 9.5S-.1 343.7 0 352.3l1 127c.1 17.700 14.6 31.9 32.3 31.700s31.900-14.600 31.700-32.300l-.4-51.500 10.700 10.100C121.600 483.400 185.500 512 256 512c129 0 235.700-95.400 253.400-219.500"/></svg>
<!-- expand icon -->
<svg class="a" style="left:650px;top:371px" width="17" height="17" viewBox="0 0 512 512"><path fill="#666" d="M344 0h144c13.3 0 24 10.7 24 24v144c0 9.7-5.8 18.5-14.8 22.2s-19.3 1.7-26.2-5.2l-39-39-87 87c-9.4 9.4-24.6 9.4-33.9 0l-32-32c-9.4-9.4-9.4-24.6 0-33.9l87-87-39-39c-6.9-6.9-8.9-17.2-5.2-26.2S334.3 0 344 0M168 512H24c-13.3 0-24-10.7-24-24V344c0-9.7 5.8-18.5 14.8-22.2s19.3-1.6 26.2 5.2l39 39 87-87c9.4-9.4 24.6-9.4 33.9 0l32 32c9.4 9.4 9.4 24.6 0 33.9l-87 87 39 39c6.9 6.9 8.9 17.2 5.2 26.2S177.7 512 168 512"/></svg>
<svg class="a" style="left:710px;top:402px" width="570" height="145" viewBox="710 402 570 145"><g stroke="#e6e6e6" stroke-width="1" fill="none"><line x1="875.5" y1="401" x2="875.5" y2="531"/><line x1="1010.5" y1="401" x2="1010.5" y2="531"/><line x1="1145.5" y1="401" x2="1145.5" y2="531"/><line x1="740" y1="434" x2="1280" y2="434"/><line x1="740" y1="466.5" x2="1280" y2="466.5"/><line x1="740" y1="498.5" x2="1280" y2="498.5"/><line x1="740" y1="531.5" x2="1280" y2="531.5"/><line x1="740.5" y1="401" x2="740.5" y2="531"/></g><g font-family="Liberation Sans" font-size="12" fill="#444" text-anchor="end"><text x="738" y="405.7">2</text><text x="738" y="438.3">1.5</text><text x="738" y="470.7">1</text><text x="738" y="502.90000000000003">0.5</text><text x="738" y="535.3">0</text></g><g font-family="Liberation Sans" font-size="12" fill="#444" text-anchor="middle"><text x="740" y="546">0</text><text x="875" y="546">0.5</text><text x="1010" y="546">1</text><text x="1145" y="546">1.5</text><text x="1280" y="546">2</text></g><text x="1010" y="472.4" font-family="Liberation Sans" font-size="15" fill="#3d4686" text-anchor="middle">No Data</text></svg>
<svg class="a" style="left:710px;top:617px" width="570" height="145" viewBox="710 617 570 145"><g stroke="#e6e6e6" stroke-width="1" fill="none"><line x1="875.5" y1="616" x2="875.5" y2="746"/><line x1="1010.5" y1="616" x2="1010.5" y2="746"/><line x1="1145.5" y1="616" x2="1145.5" y2="746"/><line x1="740" y1="649" x2="1280" y2="649"/><line x1="740" y1="681.5" x2="1280" y2="681.5"/><line x1="740" y1="713.5" x2="1280" y2="713.5"/><line x1="740" y1="746.5" x2="1280" y2="746.5"/><line x1="740.5" y1="616" x2="740.5" y2="746"/></g><g font-family="Liberation Sans" font-size="12" fill="#444" text-anchor="end"><text x="738" y="620.6999999999999">2</text><text x="738" y="653.3">1.5</text><text x="738" y="685.6999999999999">1</text><text x="738" y="717.9">0.5</text><text x="738" y="750.3">0</text></g><g font-family="Liberation Sans" font-size="12" fill="#444" text-anchor="middle"><text x="740" y="761">0</text><text x="875" y="761">0.5</text><text x="1010" y="761">1</text><text x="1145" y="761">1.5</text><text x="1280" y="761">2</text></g><text x="1010" y="687.4" font-family="Liberation Sans" font-size="15" fill="#3d4686" text-anchor="middle">No Data</text></svg>
</body></html>
